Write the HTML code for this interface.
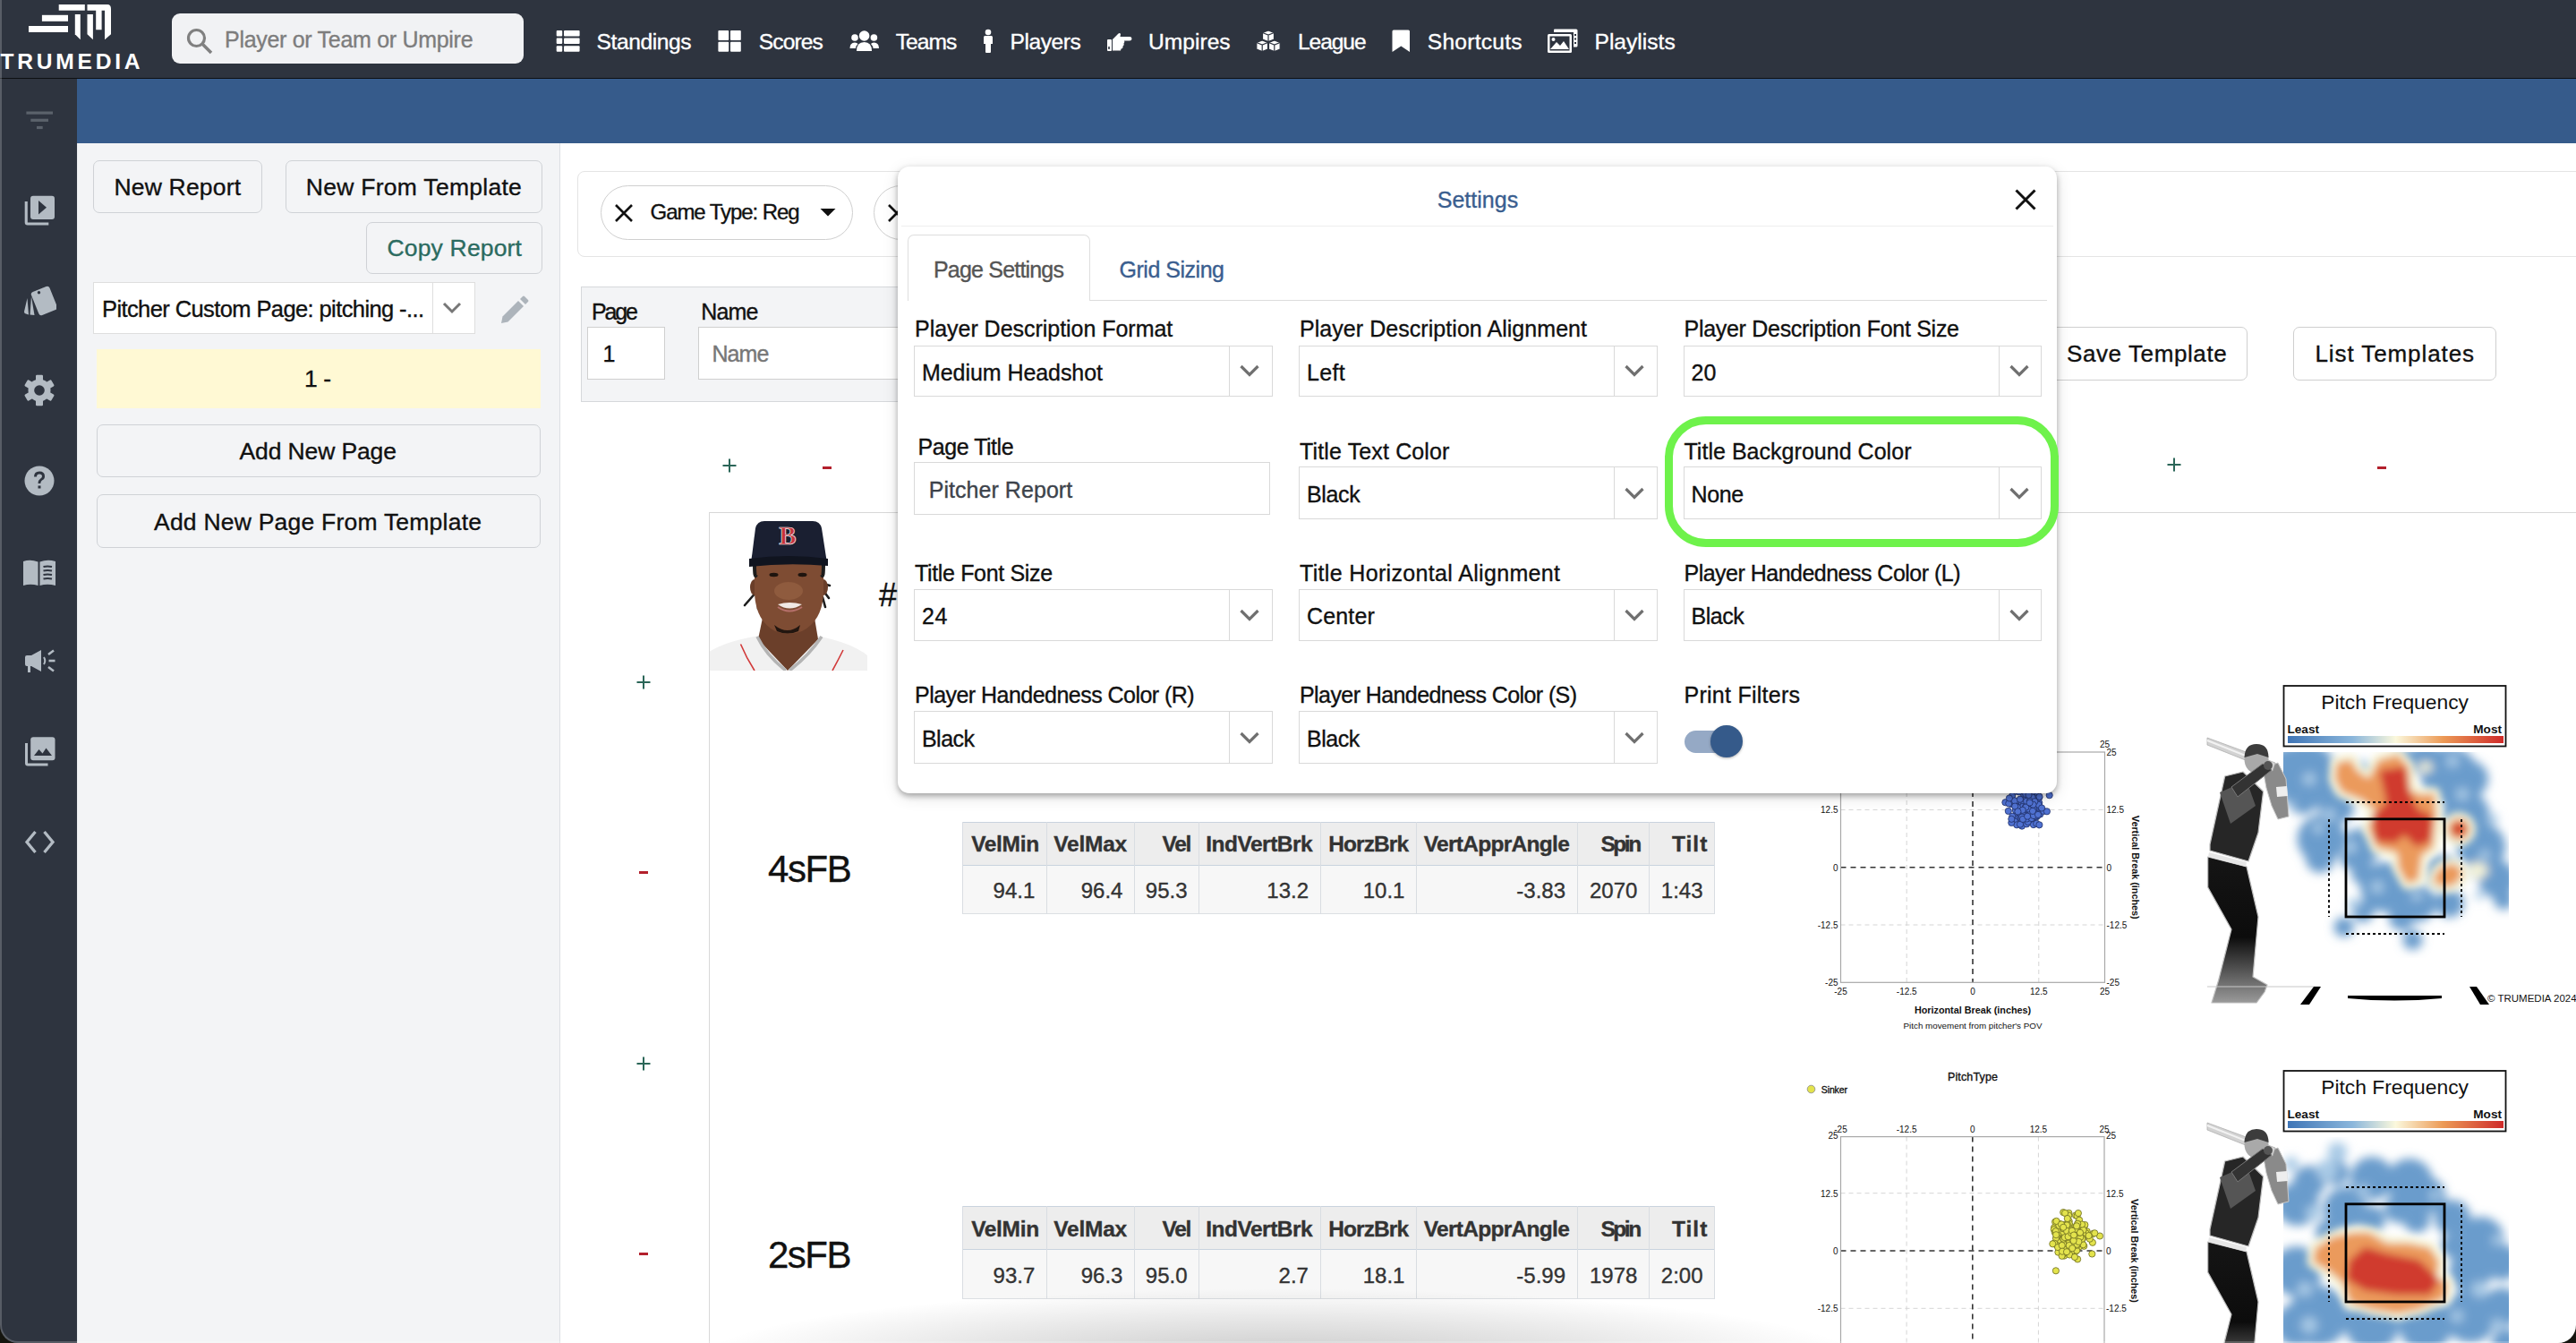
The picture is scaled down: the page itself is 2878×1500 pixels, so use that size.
<!DOCTYPE html><html><head><meta charset="utf-8"><title>TruMedia</title><style>
*{box-sizing:border-box;margin:0;padding:0}
html,body{width:2878px;height:1500px;overflow:hidden;background:#fff;font-family:"Liberation Sans",sans-serif;color:#111}
.a{position:absolute}
.t{position:absolute;white-space:nowrap;-webkit-text-stroke:0.35px currentColor}
</style></head><body>
<div class="a" style="left:0px;top:0px;width:2878px;height:87px;background:#2e343f"></div>
<div class="a" style="left:0px;top:87px;width:2878px;height:1px;background:#0d0f12"></div>
<svg class="a" style="left:0;top:0" width="170" height="87" viewBox="0 0 170 87">
<g fill="#fff">
<rect x="65.7" y="5" width="29.1" height="6.7"/>
<rect x="46.9" y="16.8" width="29.1" height="7"/>
<rect x="32" y="29" width="44" height="7"/>
<path d="M83.8 16 H89.8 V44.2 L83.8 38.3 Z"/>
<path d="M97.5 16 H103.9 V44.2 L97.5 38.3 Z"/>
<path d="M97.5 5 H120 Q124 5 124 10 V38.3 L117 44.2 V11.7 H113.6 V33.2 H107.2 V11.7 H97.5 Z"/>
</g>
<text x="0.5" y="76.7" font-family="Liberation Sans" font-weight="bold" font-size="24.6" fill="#fff" letter-spacing="3.75">TRUMEDIA</text>
</svg>
<div class="a" style="left:192px;top:15px;width:393px;height:56px;background:#f1f2f4;border-radius:9px"></div>
<svg class="a" style="left:207px;top:30px" width="34" height="32" viewBox="0 0 34 32">
<circle cx="12.5" cy="12.5" r="9" fill="none" stroke="#808080" stroke-width="3.2"/>
<line x1="19" y1="19" x2="29" y2="29" stroke="#808080" stroke-width="3.6" stroke-linecap="butt"/>
</svg>
<div class="t" style="top:24.0px;height:40px;line-height:40px;font-size:25px;color:#7d7d7d;font-weight:normal;letter-spacing:-0.296px;left:251.0px;">Player or Team or Umpire</div>
<div class="t" style="top:26.5px;height:39px;line-height:39px;font-size:24.6px;color:#fff;font-weight:normal;letter-spacing:-0.425px;left:666.6px;">Standings</div>
<div class="t" style="top:26.5px;height:39px;line-height:39px;font-size:24.6px;color:#fff;font-weight:normal;letter-spacing:-0.92px;left:847.8px;">Scores</div>
<div class="t" style="top:26.5px;height:39px;line-height:39px;font-size:24.6px;color:#fff;font-weight:normal;letter-spacing:-1.0px;left:1000.8px;">Teams</div>
<div class="t" style="top:26.5px;height:39px;line-height:39px;font-size:24.6px;color:#fff;font-weight:normal;letter-spacing:-0.433px;left:1128.5px;">Players</div>
<div class="t" style="top:26.5px;height:39px;line-height:39px;font-size:24.6px;color:#fff;font-weight:normal;letter-spacing:0.033px;left:1282.9px;">Umpires</div>
<div class="t" style="top:26.5px;height:39px;line-height:39px;font-size:24.6px;color:#fff;font-weight:normal;letter-spacing:-1.1px;left:1450.0px;">League</div>
<div class="t" style="top:26.5px;height:39px;line-height:39px;font-size:24.6px;color:#fff;font-weight:normal;letter-spacing:0.225px;left:1594.8px;">Shortcuts</div>
<div class="t" style="top:26.5px;height:39px;line-height:39px;font-size:24.6px;color:#fff;font-weight:normal;left:1781.5px;">Playlists</div>
<svg class="a" style="left:621px;top:33px" width="28" height="26" viewBox="0 0 28 26"><g fill="#fff">
<rect x="0.7" y="1" width="6.5" height="6.5" rx="1"/><rect x="9" y="1" width="17.6" height="6.5" rx="1"/>
<rect x="0.7" y="9.6" width="6.5" height="6.5" rx="1"/><rect x="9" y="9.6" width="17.6" height="6.5" rx="1"/>
<rect x="0.7" y="18.2" width="6.5" height="6.5" rx="1"/><rect x="9" y="18.2" width="17.6" height="6.5" rx="1"/>
</g></svg>
<svg class="a" style="left:802px;top:33px" width="28" height="26" viewBox="0 0 28 26"><g fill="#fff">
<rect x="0.4" y="1" width="11.8" height="11" rx="1"/><rect x="14" y="1" width="11.8" height="11" rx="1"/>
<rect x="0.4" y="13.8" width="11.8" height="11" rx="1"/><rect x="14" y="13.8" width="11.8" height="11" rx="1"/>
</g></svg>
<svg class="a" style="left:949px;top:33px" width="34" height="26" viewBox="0 0 34 26"><g fill="#fff">
<circle cx="16.6" cy="7" r="5.8"/><path d="M8 24 Q8 14 16.6 14 Q25 14 25 24 Z"/>
<circle cx="6" cy="9" r="3.8"/><path d="M0.5 21 Q0.5 14.5 6 14.5 Q8.5 14.5 9.5 16 Q7 18.5 7 21 Z"/>
<circle cx="27.4" cy="9" r="3.8"/><path d="M33 21 Q33 14.5 27.4 14.5 Q25 14.5 24 16 Q26.5 18.5 26.5 21 Z"/>
</g></svg>
<svg class="a" style="left:1097px;top:32px" width="14" height="28" viewBox="0 0 14 28"><g fill="#fff">
<circle cx="7" cy="4" r="3.3"/><path d="M2 9.5 Q2 8 3.5 8 H10.5 Q12 8 12 9.5 V17 L10 17 V26 Q10 27 9 27 H5 Q4 27 4 26 V17 L2 17 Z"/>
</g></svg>
<svg class="a" style="left:1236px;top:33px" width="30" height="26" viewBox="0 0 30 26"><g fill="#fff">
<rect x="1" y="11" width="5" height="13" rx="1"/>
<path d="M7 11 L13 5 Q15 3 16 5 L15.5 8 H26 Q28.5 8 28.5 10.2 Q28.5 12.4 26 12.4 H20 Q21 14 19.5 15.5 Q20.5 17.5 18.5 18.5 Q19 21 16.5 21.5 L16 23.5 H7 Z"/>
</g><rect x="2.2" y="19" width="1.6" height="3" fill="#2e343f"/></svg>
<svg class="a" style="left:1403px;top:33px" width="28" height="26" viewBox="0 0 28 26"><g fill="#fff" stroke="#2e343f" stroke-width="1.2">
<path d="M14 1 L20.5 3.5 V11 L14 13.5 L7.5 11 V3.5 Z"/>
<path d="M7.2 12 L13.5 14.5 V22 L7.2 24.5 L0.8 22 V14.5 Z"/>
<path d="M20.8 12 L27.2 14.5 V22 L20.8 24.5 L14.5 22 V14.5 Z"/>
<path d="M7.5 3.5 L14 6 L20.5 3.5 M14 6 V13.5 M0.8 14.5 L7.2 17 L13.5 14.5 M7.2 17 V24.5 M14.5 14.5 L20.8 17 L27.2 14.5 M20.8 17 V24.5" fill="none"/>
</g></svg>
<svg class="a" style="left:1555px;top:33px" width="22" height="26" viewBox="0 0 22 26"><path fill="#fff" d="M0.5 2 Q0.5 0.5 2 0.5 H18.5 Q20 0.5 20 2 V25 L10.3 18.5 L0.5 25 Z"/></svg>
<svg class="a" style="left:1728px;top:32px" width="36" height="28" viewBox="0 0 36 28"><g fill="#fff">
<path d="M8 1.5 Q8 0.5 9 0.5 H33 Q34.5 0.5 34.5 2 V19 Q34.5 20.5 33 20.5 H30 V4 H8 Z"/>
<rect x="1" y="6" width="27" height="21" rx="1.5"/>
</g><g fill="#2e343f"><rect x="3.5" y="8.5" width="22" height="16"/></g>
<g fill="#fff"><circle cx="7.5" cy="12" r="2"/><path d="M4 23 L11 15 L15 19 L19 14 L25 23 Z"/>
<rect x="31" y="6" width="2" height="2" fill="#2e343f"/><rect x="31" y="10.5" width="2" height="2" fill="#2e343f"/><rect x="31" y="15" width="2" height="2" fill="#2e343f"/></g></svg>
<div class="a" style="left:86px;top:88px;width:2792px;height:72px;background:#365b8b"></div>
<div class="a" style="left:0px;top:88px;width:86px;height:1412px;background:#2e343f"></div>
<svg class="a" style="left:28px;top:123px" width="32" height="22" viewBox="0 0 32 22"><g fill="#5b626b">
<rect x="1.4" y="1.5" width="29.6" height="3.2"/><rect x="6.3" y="9.7" width="19.7" height="3.2"/><rect x="13" y="17.9" width="6.7" height="3.2"/>
</g></svg>
<svg class="a" style="left:26px;top:217px" width="36" height="36" viewBox="0 0 36 36">
<path d="M1.7 8 H4.8 V31.6 H28.3 V34.6 H4.7 Q1.7 34.6 1.7 31.6 Z" fill="#b3bbc3"/>
<rect x="8" y="1.7" width="27" height="26.3" rx="3" fill="#b3bbc3"/>
<path d="M17 7 L26 14.8 L17 22.6 Z" fill="#2e343f"/>
</svg>
<svg class="a" style="left:25px;top:318px" width="38" height="36" viewBox="0 0 38 36">
<g transform="rotate(-22 24 17)"><rect x="13" y="4" width="22" height="28" rx="3" fill="#b3bbc3"/></g>
<circle cx="18.5" cy="8.7" r="1.7" fill="#2e343f"/>
<path d="M5.5 15 L2 30 Q1.8 32 4 32.5 L7 33.5 Z" fill="#b3bbc3"/>
<path d="M10 13 L8.5 33.5 L13.5 34 Z" fill="#b3bbc3"/>
</svg>
<svg class="a" style="left:25px;top:417px" width="38" height="38" viewBox="0 0 38 38"><g fill="#b3bbc3">
<rect x="15" y="1.8" width="8" height="9" rx="1.2" transform="rotate(0 19 19)"/><rect x="15" y="1.8" width="8" height="9" rx="1.2" transform="rotate(60 19 19)"/><rect x="15" y="1.8" width="8" height="9" rx="1.2" transform="rotate(120 19 19)"/><rect x="15" y="1.8" width="8" height="9" rx="1.2" transform="rotate(180 19 19)"/><rect x="15" y="1.8" width="8" height="9" rx="1.2" transform="rotate(240 19 19)"/><rect x="15" y="1.8" width="8" height="9" rx="1.2" transform="rotate(300 19 19)"/><circle cx="19" cy="19" r="12.5"/></g>
<circle cx="19" cy="19" r="5.8" fill="#2e343f"/>
</svg>
<svg class="a" style="left:26px;top:519px" width="36" height="36" viewBox="0 0 36 36">
<circle cx="18" cy="18" r="16.5" fill="#b3bbc3"/>
<path d="M12 13.5 Q12 7.5 18 7.5 Q24 7.5 24 13 Q24 16 21 17.5 Q19.3 18.5 19.3 21 H16.5 Q16.5 17.3 19 15.8 Q21 14.6 21 13 Q21 10.5 18 10.5 Q15 10.5 15 13.5 Z" fill="#2e343f"/>
<rect x="16.5" y="23.5" width="3" height="3" fill="#2e343f"/>
</svg>
<svg class="a" style="left:25px;top:624px" width="38" height="32" viewBox="0 0 38 32">
<path d="M1 3 Q9 0.5 17.5 3.5 V30 Q9 27.5 1 30 Z" fill="#b3bbc3"/>
<path d="M19.5 3.5 Q28 0.5 37 3 V30 Q28 27.5 19.5 30 Z" fill="#b3bbc3"/>
<g stroke="#2e343f" stroke-width="2" fill="none"><path d="M23.5 9 Q28 8 33 9"/><path d="M23.5 13.5 Q28 12.5 33 13.5"/><path d="M23.5 18 Q28 17 33 18"/><path d="M23.5 22.5 Q28 21.5 33 22.5"/></g>
</svg>
<svg class="a" style="left:27px;top:723px" width="36" height="32" viewBox="0 0 36 32">
<path d="M1 11 Q1 9 3 9 H8 L19 3 V27 L8 21 H7 V28 H4 V21 H3 Q1 21 1 19 Z" fill="#b3bbc3"/>
<path d="M22 11 Q24.5 15 22 19" stroke="#b3bbc3" stroke-width="2" fill="none"/>
<g stroke="#b3bbc3" stroke-width="2.6"><line x1="27" y1="8" x2="33" y2="3.5"/><line x1="27.5" y1="15" x2="34.5" y2="15"/><line x1="27" y1="22" x2="33" y2="26.5"/></g>
</svg>
<svg class="a" style="left:27px;top:822px" width="36" height="36" viewBox="0 0 36 36">
<path d="M1 8 H4 V30.6 H26.5 V33.6 H4 Q1 33.6 1 30.6 Z" fill="#b3bbc3"/>
<rect x="7.2" y="1.3" width="27.3" height="26" rx="3" fill="#b3bbc3"/>
<path d="M11 22 L16.5 15 L20.5 19.5 L24.5 13.5 L31 22 Z" fill="#2e343f"/>
</svg>
<svg class="a" style="left:27px;top:924px" width="36" height="34" viewBox="0 0 36 34">
<path d="M12.5 5 L3 16.5 L12.5 28" stroke="#b3bbc3" stroke-width="3.3" fill="none"/>
<path d="M22.5 5 L32 16.5 L22.5 28" stroke="#b3bbc3" stroke-width="3.3" fill="none"/>
</svg>
<div class="a" style="left:86px;top:160px;width:540px;height:1340px;background:#f3f4f6;border-right:1px solid #dcdfe3"></div>
<div class="a" style="left:86px;top:160px;width:1px;height:1340px;background:#e9ebee"></div>
<div class="a" style="left:104px;top:179px;width:189px;height:59px;background:#f3f4f6;border:1.5px solid #cfd2d6;border-radius:7px"></div>
<div class="t" style="top:188.0px;height:42px;line-height:42px;font-size:26.5px;color:#111;font-weight:normal;letter-spacing:0.178px;left:127.5px;">New Report</div>
<div class="a" style="left:319px;top:179px;width:287px;height:59px;background:#f3f4f6;border:1.5px solid #cfd2d6;border-radius:7px"></div>
<div class="t" style="top:188.0px;height:42px;line-height:42px;font-size:26.5px;color:#111;font-weight:normal;letter-spacing:0.275px;left:341.8px;">New From Template</div>
<div class="a" style="left:409px;top:247.5px;width:197px;height:58.5px;background:#f3f4f6;border:1.5px solid #cfd2d6;border-radius:7px"></div>
<div class="t" style="top:256.0px;height:42px;line-height:42px;font-size:26.5px;color:#2b6b60;font-weight:normal;letter-spacing:0.17px;left:432.5px;">Copy Report</div>
<div class="a" style="left:104px;top:315px;width:427px;height:58px;background:#fff;border:1px solid #dedede"></div>
<div class="a" style="left:483px;top:315px;width:1px;height:58px;background:#dedede"></div>
<div class="t" style="top:325.0px;height:40px;line-height:40px;font-size:25.5px;color:#111;font-weight:normal;letter-spacing:-0.6px;left:114.0px;">Pitcher Custom Page: pitching -...</div>
<svg class="a" style="left:494px;top:337px" width="22" height="14" viewBox="0 0 22 14"><path d="M2 2 L11 11 L20 2" stroke="#777" stroke-width="3" fill="none"/></svg>
<svg class="a" style="left:558px;top:329px" width="34" height="34" viewBox="0 0 34 34"><g fill="#adb4bb">
<path d="M2 32 L3.5 24.5 L21 7 L27 13 L9.5 30.5 Z"/><path d="M23 5 L26 2 Q27 1 28 2 L32 6 Q33 7 32 8 L29 11 Z"/></g></svg>
<div class="a" style="left:108px;top:390px;width:496px;height:66px;background:#fff9d4"></div>
<div class="t" style="top:402.0px;height:42px;line-height:42px;font-size:26.5px;color:#111;font-weight:normal;letter-spacing:-0.45px;left:-645.225px;width:2000px;text-align:center;">1 -</div>
<div class="a" style="left:108px;top:474px;width:496px;height:59px;background:#f3f4f6;border:1.5px solid #cfd2d6;border-radius:7px"></div>
<div class="t" style="top:483.0px;height:42px;line-height:42px;font-size:26.5px;color:#111;font-weight:normal;letter-spacing:-0.118px;left:267.5px;">Add New Page</div>
<div class="a" style="left:108px;top:552px;width:496px;height:60px;background:#f3f4f6;border:1.5px solid #cfd2d6;border-radius:7px"></div>
<div class="t" style="top:561.5px;height:42px;line-height:42px;font-size:26.5px;color:#111;font-weight:normal;letter-spacing:0.224px;left:172.0px;">Add New Page From Template</div>
<div class="a" style="left:645px;top:191px;width:2255px;height:96px;background:#fff;border:1px solid #e4e4e4;border-radius:8px"></div>
<div class="a" style="left:671px;top:206.5px;width:282px;height:61.0px;background:#fff;border:1.3px solid #cfcfcf;border-radius:31px"></div>
<svg class="a" style="left:685px;top:226px" width="24" height="24" viewBox="0 0 24 24"><path d="M3 3 L21 21 M21 3 L3 21" stroke="#111" stroke-width="2.6"/></svg>
<div class="t" style="top:218.0px;height:38px;line-height:38px;font-size:24px;color:#111;font-weight:normal;letter-spacing:-1.077px;left:726.6px;">Game Type: Reg</div>
<svg class="a" style="left:915px;top:231px" width="20" height="12" viewBox="0 0 20 12"><path d="M1.5 2 H18.5 L10 10.5 Z" fill="#111"/></svg>
<div class="a" style="left:976px;top:206.5px;width:264px;height:61.0px;background:#fff;border:1.3px solid #cfcfcf;border-radius:31px"></div>
<svg class="a" style="left:990px;top:226px" width="24" height="24" viewBox="0 0 24 24"><path d="M3 3 L21 21 M21 3 L3 21" stroke="#111" stroke-width="2.6"/></svg>
<div class="a" style="left:648.5px;top:319.6px;width:851.5px;height:129.89999999999998px;background:#f3f4f6;border:1px solid #d6d8db"></div>
<div class="t" style="top:327.5px;height:40px;line-height:40px;font-size:25px;color:#111;font-weight:normal;letter-spacing:-2.2px;left:661.0px;">Page</div>
<div class="t" style="top:327.5px;height:40px;line-height:40px;font-size:25px;color:#111;font-weight:normal;letter-spacing:-0.9px;left:783.3px;">Name</div>
<div class="a" style="left:656px;top:364.5px;width:86.60000000000002px;height:59.10000000000002px;background:#fff;border:1px solid #cfcfcf"></div>
<div class="t" style="top:375.0px;height:40px;line-height:40px;font-size:25px;color:#111;font-weight:normal;left:673.4px;">1</div>
<div class="a" style="left:779.7px;top:364.5px;width:620.3px;height:59.10000000000002px;background:#fff;border:1px solid #cfcfcf"></div>
<div class="t" style="top:375.0px;height:40px;line-height:40px;font-size:25px;color:#777;font-weight:normal;letter-spacing:-0.9px;left:795.4px;">Name</div>
<svg class="a" style="left:807px;top:512px" width="16" height="16" viewBox="0 0 16 16"><path d="M8 0.5 V15.5 M0.5 8 H15.5" stroke="#2b6658" stroke-width="2"/></svg>
<div class="a" style="left:919px;top:520.5px;width:10px;height:3.0px;background:#b3202c"></div>
<svg class="a" style="left:2421px;top:511.4px" width="16" height="16" viewBox="0 0 16 16"><path d="M8 0.5 V15.5 M0.5 8 H15.5" stroke="#2b6658" stroke-width="2"/></svg>
<div class="a" style="left:2656px;top:520.5px;width:10px;height:3.0px;background:#b3202c"></div>
<div class="a" style="left:2250px;top:365px;width:261px;height:60px;background:#fff;border:1.3px solid #cfcfcf;border-radius:7px"></div>
<div class="t" style="top:374.5px;height:41px;line-height:41px;font-size:26px;color:#111;font-weight:normal;letter-spacing:0.6px;left:2309.0px;">Save Template</div>
<div class="a" style="left:2562px;top:365px;width:226.5px;height:60px;background:#fff;border:1.3px solid #cfcfcf;border-radius:7px"></div>
<div class="t" style="top:374.5px;height:41px;line-height:41px;font-size:26px;color:#111;font-weight:normal;letter-spacing:0.908px;left:2586.5px;">List Templates</div>
<div class="a" style="left:792px;top:572px;width:2086px;height:928px;border-left:1px solid #d8d8d8;border-top:1px solid #d8d8d8"></div>
<svg class="a" style="left:711px;top:754px" width="16" height="16" viewBox="0 0 16 16"><path d="M8 0.5 V15.5 M0.5 8 H15.5" stroke="#2b6658" stroke-width="2"/></svg>
<div class="a" style="left:714px;top:972.5px;width:10px;height:3.0px;background:#b3202c"></div>
<svg class="a" style="left:711px;top:1180px" width="16" height="16" viewBox="0 0 16 16"><path d="M8 0.5 V15.5 M0.5 8 H15.5" stroke="#2b6658" stroke-width="2"/></svg>
<div class="a" style="left:714px;top:1398.5px;width:10px;height:3.0px;background:#b3202c"></div>
<div class="t" style="top:635.5px;height:57px;line-height:57px;font-size:36px;color:#111;font-weight:normal;left:982px;">#</div>
<div class="t" style="top:936.5px;height:67px;line-height:67px;font-size:42px;color:#111;font-weight:normal;letter-spacing:-1.433px;left:858.0px;">4sFB</div>
<div class="t" style="top:1367.5px;height:67px;line-height:67px;font-size:42px;color:#111;font-weight:normal;letter-spacing:-1.5px;left:858.0px;">2sFB</div>
<div class="a" style="left:1075.7px;top:917.8px;width:839.8px;height:48.799999999999955px;background:#ededed;border-top:1.5px solid #c9d3de;border-bottom:1.5px solid #c9d3de"></div>
<div class="a" style="left:1075.7px;top:966.5999999999999px;width:839.8px;height:54.700000000000045px;background:#f7f7f7;border-bottom:1px solid #dcdfe3"></div>
<div class="a" style="left:1075.2px;top:917.8px;width:1.0px;height:103.5px;background:#d9dde2"></div>
<div class="a" style="left:1168.8px;top:917.8px;width:1.0px;height:103.5px;background:#d9dde2"></div>
<div class="a" style="left:1266.9px;top:917.8px;width:1.0px;height:103.5px;background:#d9dde2"></div>
<div class="a" style="left:1339.0px;top:917.8px;width:1.0px;height:103.5px;background:#d9dde2"></div>
<div class="a" style="left:1474.5px;top:917.8px;width:1.0px;height:103.5px;background:#d9dde2"></div>
<div class="a" style="left:1581.9px;top:917.8px;width:1.0px;height:103.5px;background:#d9dde2"></div>
<div class="a" style="left:1761.5px;top:917.8px;width:1.0px;height:103.5px;background:#d9dde2"></div>
<div class="a" style="left:1841.9px;top:917.8px;width:1.0px;height:103.5px;background:#d9dde2"></div>
<div class="a" style="left:1915.0px;top:917.8px;width:1.0px;height:103.5px;background:#d9dde2"></div>
<div class="t" style="top:923.2px;height:39px;line-height:39px;font-size:24.5px;color:#333;font-weight:bold;letter-spacing:-0.34px;left:-839.2384374999999px;width:2000px;text-align:right;">VelMin</div>
<div class="t" style="top:923.2px;height:39px;line-height:39px;font-size:24.5px;color:#333;font-weight:bold;letter-spacing:-0.22px;left:-741.0403125px;width:2000px;text-align:right;">VelMax</div>
<div class="t" style="top:923.2px;height:39px;line-height:39px;font-size:24.5px;color:#333;font-weight:bold;letter-spacing:-1.25px;left:-669.9296875px;width:2000px;text-align:right;">Vel</div>
<div class="t" style="top:923.2px;height:39px;line-height:39px;font-size:24.5px;color:#333;font-weight:bold;letter-spacing:-0.489px;left:-533.7904513888889px;width:2000px;text-align:right;">IndVertBrk</div>
<div class="t" style="top:923.2px;height:39px;line-height:39px;font-size:24.5px;color:#333;font-weight:bold;letter-spacing:-0.917px;left:-426.8197916666668px;width:2000px;text-align:right;">HorzBrk</div>
<div class="t" style="top:923.2px;height:39px;line-height:39px;font-size:24.5px;color:#333;font-weight:bold;letter-spacing:-0.708px;left:-246.8848958333333px;width:2000px;text-align:right;">VertApprAngle</div>
<div class="t" style="top:923.2px;height:39px;line-height:39px;font-size:24.5px;color:#333;font-weight:bold;letter-spacing:-2.433px;left:-168.25520833333326px;width:2000px;text-align:right;">Spin</div>
<div class="t" style="top:923.2px;height:39px;line-height:39px;font-size:24.5px;color:#333;font-weight:bold;letter-spacing:1.0px;left:-91.70468750000009px;width:2000px;text-align:right;">Tilt</div>
<div class="t" style="top:975.9px;height:38px;line-height:38px;font-size:24px;color:#333;font-weight:normal;left:-843.6859375000001px;width:2000px;text-align:right;">94.1</div>
<div class="t" style="top:975.9px;height:38px;line-height:38px;font-size:24px;color:#333;font-weight:normal;left:-745.5859375px;width:2000px;text-align:right;">96.4</div>
<div class="t" style="top:975.9px;height:38px;line-height:38px;font-size:24px;color:#333;font-weight:normal;left:-673.4859375000001px;width:2000px;text-align:right;">95.3</div>
<div class="t" style="top:975.9px;height:38px;line-height:38px;font-size:24px;color:#333;font-weight:normal;left:-537.9859375000001px;width:2000px;text-align:right;">13.2</div>
<div class="t" style="top:975.9px;height:38px;line-height:38px;font-size:24px;color:#333;font-weight:normal;left:-430.5859375px;width:2000px;text-align:right;">10.1</div>
<div class="t" style="top:975.9px;height:38px;line-height:38px;font-size:24px;color:#333;font-weight:normal;left:-250.9937500000001px;width:2000px;text-align:right;">-3.83</div>
<div class="t" style="top:975.9px;height:38px;line-height:38px;font-size:24px;color:#333;font-weight:normal;left:-170.60624999999982px;width:2000px;text-align:right;">2070</div>
<div class="t" style="top:975.9px;height:38px;line-height:38px;font-size:24px;color:#333;font-weight:normal;left:-97.48593750000009px;width:2000px;text-align:right;">1:43</div>
<div class="a" style="left:1075.7px;top:1347.4px;width:839.8px;height:48.799999999999955px;background:#ededed;border-top:1.5px solid #c9d3de;border-bottom:1.5px solid #c9d3de"></div>
<div class="a" style="left:1075.7px;top:1396.2px;width:839.8px;height:54.700000000000045px;background:#f7f7f7;border-bottom:1px solid #dcdfe3"></div>
<div class="a" style="left:1075.2px;top:1347.4px;width:1.0px;height:103.5px;background:#d9dde2"></div>
<div class="a" style="left:1168.8px;top:1347.4px;width:1.0px;height:103.5px;background:#d9dde2"></div>
<div class="a" style="left:1266.9px;top:1347.4px;width:1.0px;height:103.5px;background:#d9dde2"></div>
<div class="a" style="left:1339.0px;top:1347.4px;width:1.0px;height:103.5px;background:#d9dde2"></div>
<div class="a" style="left:1474.5px;top:1347.4px;width:1.0px;height:103.5px;background:#d9dde2"></div>
<div class="a" style="left:1581.9px;top:1347.4px;width:1.0px;height:103.5px;background:#d9dde2"></div>
<div class="a" style="left:1761.5px;top:1347.4px;width:1.0px;height:103.5px;background:#d9dde2"></div>
<div class="a" style="left:1841.9px;top:1347.4px;width:1.0px;height:103.5px;background:#d9dde2"></div>
<div class="a" style="left:1915.0px;top:1347.4px;width:1.0px;height:103.5px;background:#d9dde2"></div>
<div class="t" style="top:1352.8px;height:39px;line-height:39px;font-size:24.5px;color:#333;font-weight:bold;letter-spacing:-0.34px;left:-839.2384374999999px;width:2000px;text-align:right;">VelMin</div>
<div class="t" style="top:1352.8px;height:39px;line-height:39px;font-size:24.5px;color:#333;font-weight:bold;letter-spacing:-0.22px;left:-741.0403125px;width:2000px;text-align:right;">VelMax</div>
<div class="t" style="top:1352.8px;height:39px;line-height:39px;font-size:24.5px;color:#333;font-weight:bold;letter-spacing:-1.25px;left:-669.9296875px;width:2000px;text-align:right;">Vel</div>
<div class="t" style="top:1352.8px;height:39px;line-height:39px;font-size:24.5px;color:#333;font-weight:bold;letter-spacing:-0.489px;left:-533.7904513888889px;width:2000px;text-align:right;">IndVertBrk</div>
<div class="t" style="top:1352.8px;height:39px;line-height:39px;font-size:24.5px;color:#333;font-weight:bold;letter-spacing:-0.917px;left:-426.8197916666668px;width:2000px;text-align:right;">HorzBrk</div>
<div class="t" style="top:1352.8px;height:39px;line-height:39px;font-size:24.5px;color:#333;font-weight:bold;letter-spacing:-0.708px;left:-246.8848958333333px;width:2000px;text-align:right;">VertApprAngle</div>
<div class="t" style="top:1352.8px;height:39px;line-height:39px;font-size:24.5px;color:#333;font-weight:bold;letter-spacing:-2.433px;left:-168.25520833333326px;width:2000px;text-align:right;">Spin</div>
<div class="t" style="top:1352.8px;height:39px;line-height:39px;font-size:24.5px;color:#333;font-weight:bold;letter-spacing:1.0px;left:-91.70468750000009px;width:2000px;text-align:right;">Tilt</div>
<div class="t" style="top:1405.6px;height:38px;line-height:38px;font-size:24px;color:#333;font-weight:normal;left:-843.6859375000001px;width:2000px;text-align:right;">93.7</div>
<div class="t" style="top:1405.6px;height:38px;line-height:38px;font-size:24px;color:#333;font-weight:normal;left:-745.5859375px;width:2000px;text-align:right;">96.3</div>
<div class="t" style="top:1405.6px;height:38px;line-height:38px;font-size:24px;color:#333;font-weight:normal;left:-673.4859375000001px;width:2000px;text-align:right;">95.0</div>
<div class="t" style="top:1405.6px;height:38px;line-height:38px;font-size:24px;color:#333;font-weight:normal;left:-538.034375px;width:2000px;text-align:right;">2.7</div>
<div class="t" style="top:1405.6px;height:38px;line-height:38px;font-size:24px;color:#333;font-weight:normal;left:-430.5859375px;width:2000px;text-align:right;">18.1</div>
<div class="t" style="top:1405.6px;height:38px;line-height:38px;font-size:24px;color:#333;font-weight:normal;left:-250.9937500000001px;width:2000px;text-align:right;">-5.99</div>
<div class="t" style="top:1405.6px;height:38px;line-height:38px;font-size:24px;color:#333;font-weight:normal;left:-170.60624999999982px;width:2000px;text-align:right;">1978</div>
<div class="t" style="top:1405.6px;height:38px;line-height:38px;font-size:24px;color:#333;font-weight:normal;left:-97.48593750000009px;width:2000px;text-align:right;">2:00</div>
<svg class="a" style="left:793px;top:573px" width="176" height="176" viewBox="1 1 176 176"><rect x="1" y="1" width="176" height="176" fill="#fff"/><path d="M0 156 Q22 143 57 138 L88 177 L120 138 Q160 146 177 160 V177 H0 Z" fill="#f1f1f1"/><path d="M35.5 147.5 Q42 163 51 177 M150 154 Q144 166 138 177" stroke="#d23a3a" stroke-width="1.6" fill="none"/><path d="M60 118 L118 118 L122 142 L88 177 L55 142 Z" fill="#6b3f2a"/><path d="M54 139 Q64 160 86 177 M126 139 Q112 160 90 177" stroke="#b4b4b4" stroke-width="3.5" fill="none"/><path d="M54 88 L40 104 M55 95 L55 108 M128 80 L135 82 M128 88 L134 96 M127 95 L130 106" stroke="#1d1d1d" stroke-width="2.6" stroke-linecap="round"/><ellipse cx="51" cy="84" rx="5" ry="9" fill="#6a3e29"/><ellipse cx="128" cy="84" rx="5" ry="9" fill="#6a3e29"/><path d="M51 62 Q51 50 89 50 Q128 50 128 62 L128 92 Q126 122 104 133 Q89 139 74 133 Q53 122 51 92 Z" fill="#7e4c33"/><ellipse cx="89" cy="88" rx="16" ry="10" fill="#8f5b3e"/><path d="M73 126 Q88 138 102 126 L100 133 Q88 138 76 133 Z" fill="#221610"/><path d="M77 103 Q90 99 104 103 Q90 112 77 103 Z" fill="#f0e8e4"/><path d="M77 106 Q90 115 104 106" stroke="#b6706a" stroke-width="2" fill="none"/><ellipse cx="72.5" cy="70" rx="5" ry="2.2" fill="#1e140e"/><ellipse cx="104.5" cy="70" rx="5" ry="2.2" fill="#1e140e"/><path d="M51 58 Q51 75 53 70 M128 58 Q128 75 126 70" stroke="#1d1d1d" stroke-width="4"/><path d="M47 57 L52 18 Q54 10 62 10 L116 10 Q124 10 126 18 L132 57 Z" fill="#1a1f31"/><path d="M45 52 Q89 46 133 52 L133 60 Q89 56 45 61 Z" fill="#10141f"/><text x="88" y="36" text-anchor="middle" font-family="Liberation Serif" font-weight="bold" font-size="29" fill="#c8323a" stroke="#f4f4f4" stroke-width="0.7">B</text></svg>
<svg class="a" style="left:0;top:0;overflow:visible" width="2878" height="1500"><line x1="2130.2" y1="840" x2="2130.2" y2="1097.3" stroke="#d5d5d5" stroke-width="1" stroke-dasharray="5,4"/><line x1="2056.5" y1="1033.0" x2="2351.5" y2="1033.0" stroke="#d5d5d5" stroke-width="1" stroke-dasharray="5,4"/><line x1="2277.8" y1="840" x2="2277.8" y2="1097.3" stroke="#d5d5d5" stroke-width="1" stroke-dasharray="5,4"/><line x1="2056.5" y1="904.4" x2="2351.5" y2="904.4" stroke="#d5d5d5" stroke-width="1" stroke-dasharray="5,4"/><line x1="2204.0" y1="840" x2="2204.0" y2="1097.3" stroke="#333" stroke-width="1.6" stroke-dasharray="6,5"/><line x1="2056.5" y1="968.7" x2="2351.5" y2="968.7" stroke="#333" stroke-width="1.6" stroke-dasharray="6,5"/><rect x="2056.5" y="840" width="295.0" height="257.3" fill="none" stroke="#a8a8a8" stroke-width="1.2"/><text x="2053.5" y="844.1" text-anchor="end" font-family="Liberation Sans" font-size="10" fill="#111">25</text><text x="2353.5" y="844.1" font-family="Liberation Sans" font-size="10" fill="#111">25</text><text x="2053.5" y="908.4" text-anchor="end" font-family="Liberation Sans" font-size="10" fill="#111">12.5</text><text x="2353.5" y="908.4" font-family="Liberation Sans" font-size="10" fill="#111">12.5</text><text x="2053.5" y="972.7" text-anchor="end" font-family="Liberation Sans" font-size="10" fill="#111">0</text><text x="2353.5" y="972.7" font-family="Liberation Sans" font-size="10" fill="#111">0</text><text x="2053.5" y="1037.0" text-anchor="end" font-family="Liberation Sans" font-size="10" fill="#111">-12.5</text><text x="2353.5" y="1037.0" font-family="Liberation Sans" font-size="10" fill="#111">-12.5</text><text x="2053.5" y="1101.3" text-anchor="end" font-family="Liberation Sans" font-size="10" fill="#111">-25</text><text x="2353.5" y="1101.3" font-family="Liberation Sans" font-size="10" fill="#111">-25</text><text x="2056.5" y="835" text-anchor="middle" font-family="Liberation Sans" font-size="10" fill="#111">-25</text><text x="2056.5" y="1111.3" text-anchor="middle" font-family="Liberation Sans" font-size="10" fill="#111">-25</text><text x="2130.2" y="835" text-anchor="middle" font-family="Liberation Sans" font-size="10" fill="#111">-12.5</text><text x="2130.2" y="1111.3" text-anchor="middle" font-family="Liberation Sans" font-size="10" fill="#111">-12.5</text><text x="2204.0" y="835" text-anchor="middle" font-family="Liberation Sans" font-size="10" fill="#111">0</text><text x="2204.0" y="1111.3" text-anchor="middle" font-family="Liberation Sans" font-size="10" fill="#111">0</text><text x="2277.8" y="835" text-anchor="middle" font-family="Liberation Sans" font-size="10" fill="#111">12.5</text><text x="2277.8" y="1111.3" text-anchor="middle" font-family="Liberation Sans" font-size="10" fill="#111">12.5</text><text x="2351.5" y="835" text-anchor="middle" font-family="Liberation Sans" font-size="10" fill="#111">25</text><text x="2351.5" y="1111.3" text-anchor="middle" font-family="Liberation Sans" font-size="10" fill="#111">25</text><text x="2204.0" y="1132.3" text-anchor="middle" font-family="Liberation Sans" font-weight="bold" font-size="10.8" fill="#111">Horizontal Break (inches)</text><text x="2204.0" y="1149.3" text-anchor="middle" font-family="Liberation Sans" font-size="9.8" fill="#111">Pitch movement from pitcher's POV</text><text transform="translate(2381.5,968.7) rotate(90)" text-anchor="middle" font-family="Liberation Sans" font-weight="bold" font-size="10.8" fill="#111">Vertical Break (inches)</text></svg>
<div class="t" style="left:2103px;top:770px;font-size:12px;height:20px;line-height:20px">PitchType</div>
<svg class="a" style="left:0;top:0;overflow:visible" width="2878" height="1500"><circle cx="2262.7" cy="908.1" r="3.6" fill="#5072d2" stroke="#1f2f66" stroke-width="0.8"/><circle cx="2263.0" cy="898.2" r="3.6" fill="#5072d2" stroke="#1f2f66" stroke-width="0.8"/><circle cx="2256.6" cy="899.4" r="3.6" fill="#5072d2" stroke="#1f2f66" stroke-width="0.8"/><circle cx="2275.0" cy="907.1" r="3.6" fill="#5072d2" stroke="#1f2f66" stroke-width="0.8"/><circle cx="2274.3" cy="905.0" r="3.6" fill="#5072d2" stroke="#1f2f66" stroke-width="0.8"/><circle cx="2268.6" cy="904.2" r="3.6" fill="#5072d2" stroke="#1f2f66" stroke-width="0.8"/><circle cx="2250.0" cy="912.3" r="3.6" fill="#5072d2" stroke="#1f2f66" stroke-width="0.8"/><circle cx="2269.6" cy="908.0" r="3.6" fill="#5072d2" stroke="#1f2f66" stroke-width="0.8"/><circle cx="2249.8" cy="881.1" r="3.6" fill="#5072d2" stroke="#1f2f66" stroke-width="0.8"/><circle cx="2257.0" cy="896.4" r="3.6" fill="#5072d2" stroke="#1f2f66" stroke-width="0.8"/><circle cx="2267.7" cy="901.4" r="3.6" fill="#5072d2" stroke="#1f2f66" stroke-width="0.8"/><circle cx="2269.7" cy="894.3" r="3.6" fill="#5072d2" stroke="#1f2f66" stroke-width="0.8"/><circle cx="2267.8" cy="906.7" r="3.6" fill="#5072d2" stroke="#1f2f66" stroke-width="0.8"/><circle cx="2259.0" cy="922.6" r="3.6" fill="#5072d2" stroke="#1f2f66" stroke-width="0.8"/><circle cx="2270.0" cy="916.4" r="3.6" fill="#5072d2" stroke="#1f2f66" stroke-width="0.8"/><circle cx="2259.4" cy="893.1" r="3.6" fill="#5072d2" stroke="#1f2f66" stroke-width="0.8"/><circle cx="2261.9" cy="900.7" r="3.6" fill="#5072d2" stroke="#1f2f66" stroke-width="0.8"/><circle cx="2270.7" cy="905.0" r="3.6" fill="#5072d2" stroke="#1f2f66" stroke-width="0.8"/><circle cx="2261.0" cy="890.5" r="3.6" fill="#5072d2" stroke="#1f2f66" stroke-width="0.8"/><circle cx="2260.3" cy="916.7" r="3.6" fill="#5072d2" stroke="#1f2f66" stroke-width="0.8"/><circle cx="2257.7" cy="904.9" r="3.6" fill="#5072d2" stroke="#1f2f66" stroke-width="0.8"/><circle cx="2268.8" cy="884.1" r="3.6" fill="#5072d2" stroke="#1f2f66" stroke-width="0.8"/><circle cx="2265.4" cy="917.7" r="3.6" fill="#5072d2" stroke="#1f2f66" stroke-width="0.8"/><circle cx="2246.9" cy="898.1" r="3.6" fill="#5072d2" stroke="#1f2f66" stroke-width="0.8"/><circle cx="2264.0" cy="892.2" r="3.6" fill="#5072d2" stroke="#1f2f66" stroke-width="0.8"/><circle cx="2269.5" cy="901.3" r="3.6" fill="#5072d2" stroke="#1f2f66" stroke-width="0.8"/><circle cx="2251.8" cy="911.9" r="3.6" fill="#5072d2" stroke="#1f2f66" stroke-width="0.8"/><circle cx="2271.0" cy="913.4" r="3.6" fill="#5072d2" stroke="#1f2f66" stroke-width="0.8"/><circle cx="2278.0" cy="906.3" r="3.6" fill="#5072d2" stroke="#1f2f66" stroke-width="0.8"/><circle cx="2266.1" cy="886.4" r="3.6" fill="#5072d2" stroke="#1f2f66" stroke-width="0.8"/><circle cx="2270.5" cy="894.7" r="3.6" fill="#5072d2" stroke="#1f2f66" stroke-width="0.8"/><circle cx="2260.9" cy="886.8" r="3.6" fill="#5072d2" stroke="#1f2f66" stroke-width="0.8"/><circle cx="2256.3" cy="895.6" r="3.6" fill="#5072d2" stroke="#1f2f66" stroke-width="0.8"/><circle cx="2276.6" cy="877.6" r="3.6" fill="#5072d2" stroke="#1f2f66" stroke-width="0.8"/><circle cx="2251.9" cy="904.9" r="3.6" fill="#5072d2" stroke="#1f2f66" stroke-width="0.8"/><circle cx="2278.0" cy="908.9" r="3.6" fill="#5072d2" stroke="#1f2f66" stroke-width="0.8"/><circle cx="2247.9" cy="871.8" r="3.6" fill="#5072d2" stroke="#1f2f66" stroke-width="0.8"/><circle cx="2268.2" cy="893.2" r="3.6" fill="#5072d2" stroke="#1f2f66" stroke-width="0.8"/><circle cx="2254.9" cy="913.7" r="3.6" fill="#5072d2" stroke="#1f2f66" stroke-width="0.8"/><circle cx="2274.9" cy="903.9" r="3.6" fill="#5072d2" stroke="#1f2f66" stroke-width="0.8"/><circle cx="2267.2" cy="907.2" r="3.6" fill="#5072d2" stroke="#1f2f66" stroke-width="0.8"/><circle cx="2279.3" cy="909.4" r="3.6" fill="#5072d2" stroke="#1f2f66" stroke-width="0.8"/><circle cx="2269.7" cy="908.6" r="3.6" fill="#5072d2" stroke="#1f2f66" stroke-width="0.8"/><circle cx="2250.9" cy="917.4" r="3.6" fill="#5072d2" stroke="#1f2f66" stroke-width="0.8"/><circle cx="2273.6" cy="908.4" r="3.6" fill="#5072d2" stroke="#1f2f66" stroke-width="0.8"/><circle cx="2247.2" cy="894.4" r="3.6" fill="#5072d2" stroke="#1f2f66" stroke-width="0.8"/><circle cx="2272.6" cy="880.3" r="3.6" fill="#5072d2" stroke="#1f2f66" stroke-width="0.8"/><circle cx="2263.3" cy="914.2" r="3.6" fill="#5072d2" stroke="#1f2f66" stroke-width="0.8"/><circle cx="2253.2" cy="921.3" r="3.6" fill="#5072d2" stroke="#1f2f66" stroke-width="0.8"/><circle cx="2270.0" cy="900.2" r="3.6" fill="#5072d2" stroke="#1f2f66" stroke-width="0.8"/><circle cx="2267.9" cy="909.8" r="3.6" fill="#5072d2" stroke="#1f2f66" stroke-width="0.8"/><circle cx="2266.1" cy="915.7" r="3.6" fill="#5072d2" stroke="#1f2f66" stroke-width="0.8"/><circle cx="2259.0" cy="897.0" r="3.6" fill="#5072d2" stroke="#1f2f66" stroke-width="0.8"/><circle cx="2274.4" cy="902.3" r="3.6" fill="#5072d2" stroke="#1f2f66" stroke-width="0.8"/><circle cx="2257.1" cy="913.4" r="3.6" fill="#5072d2" stroke="#1f2f66" stroke-width="0.8"/><circle cx="2278.2" cy="896.7" r="3.6" fill="#5072d2" stroke="#1f2f66" stroke-width="0.8"/><circle cx="2252.6" cy="900.4" r="3.6" fill="#5072d2" stroke="#1f2f66" stroke-width="0.8"/><circle cx="2263.7" cy="898.4" r="3.6" fill="#5072d2" stroke="#1f2f66" stroke-width="0.8"/><circle cx="2277.6" cy="889.7" r="3.6" fill="#5072d2" stroke="#1f2f66" stroke-width="0.8"/><circle cx="2276.3" cy="886.8" r="3.6" fill="#5072d2" stroke="#1f2f66" stroke-width="0.8"/><circle cx="2257.9" cy="909.6" r="3.6" fill="#5072d2" stroke="#1f2f66" stroke-width="0.8"/><circle cx="2275.2" cy="912.3" r="3.6" fill="#5072d2" stroke="#1f2f66" stroke-width="0.8"/><circle cx="2268.1" cy="903.7" r="3.6" fill="#5072d2" stroke="#1f2f66" stroke-width="0.8"/><circle cx="2266.4" cy="908.9" r="3.6" fill="#5072d2" stroke="#1f2f66" stroke-width="0.8"/><circle cx="2263.4" cy="905.3" r="3.6" fill="#5072d2" stroke="#1f2f66" stroke-width="0.8"/><circle cx="2270.2" cy="902.0" r="3.6" fill="#5072d2" stroke="#1f2f66" stroke-width="0.8"/><circle cx="2271.9" cy="908.8" r="3.6" fill="#5072d2" stroke="#1f2f66" stroke-width="0.8"/><circle cx="2283.1" cy="905.9" r="3.6" fill="#5072d2" stroke="#1f2f66" stroke-width="0.8"/><circle cx="2261.2" cy="897.5" r="3.6" fill="#5072d2" stroke="#1f2f66" stroke-width="0.8"/><circle cx="2264.9" cy="913.1" r="3.6" fill="#5072d2" stroke="#1f2f66" stroke-width="0.8"/><circle cx="2262.0" cy="906.6" r="3.6" fill="#5072d2" stroke="#1f2f66" stroke-width="0.8"/><circle cx="2281.5" cy="871.2" r="3.6" fill="#5072d2" stroke="#1f2f66" stroke-width="0.8"/><circle cx="2254.9" cy="904.9" r="3.6" fill="#5072d2" stroke="#1f2f66" stroke-width="0.8"/><circle cx="2268.6" cy="904.9" r="3.6" fill="#5072d2" stroke="#1f2f66" stroke-width="0.8"/><circle cx="2261.1" cy="909.9" r="3.6" fill="#5072d2" stroke="#1f2f66" stroke-width="0.8"/><circle cx="2267.5" cy="895.7" r="3.6" fill="#5072d2" stroke="#1f2f66" stroke-width="0.8"/><circle cx="2286.9" cy="906.3" r="3.6" fill="#5072d2" stroke="#1f2f66" stroke-width="0.8"/><circle cx="2260.0" cy="900.8" r="3.6" fill="#5072d2" stroke="#1f2f66" stroke-width="0.8"/><circle cx="2263.0" cy="901.2" r="3.6" fill="#5072d2" stroke="#1f2f66" stroke-width="0.8"/><circle cx="2240.4" cy="896.2" r="3.6" fill="#5072d2" stroke="#1f2f66" stroke-width="0.8"/><circle cx="2274.1" cy="888.0" r="3.6" fill="#5072d2" stroke="#1f2f66" stroke-width="0.8"/><circle cx="2264.4" cy="913.4" r="3.6" fill="#5072d2" stroke="#1f2f66" stroke-width="0.8"/><circle cx="2272.7" cy="919.9" r="3.6" fill="#5072d2" stroke="#1f2f66" stroke-width="0.8"/><circle cx="2249.7" cy="897.8" r="3.6" fill="#5072d2" stroke="#1f2f66" stroke-width="0.8"/><circle cx="2261.9" cy="909.5" r="3.6" fill="#5072d2" stroke="#1f2f66" stroke-width="0.8"/><circle cx="2274.8" cy="869.8" r="3.6" fill="#5072d2" stroke="#1f2f66" stroke-width="0.8"/><circle cx="2274.8" cy="884.6" r="3.6" fill="#5072d2" stroke="#1f2f66" stroke-width="0.8"/><circle cx="2271.1" cy="884.1" r="3.6" fill="#5072d2" stroke="#1f2f66" stroke-width="0.8"/><circle cx="2266.6" cy="916.3" r="3.6" fill="#5072d2" stroke="#1f2f66" stroke-width="0.8"/><circle cx="2263.7" cy="904.3" r="3.6" fill="#5072d2" stroke="#1f2f66" stroke-width="0.8"/><circle cx="2272.2" cy="903.7" r="3.6" fill="#5072d2" stroke="#1f2f66" stroke-width="0.8"/><circle cx="2264.2" cy="920.4" r="3.6" fill="#5072d2" stroke="#1f2f66" stroke-width="0.8"/><circle cx="2274.4" cy="898.5" r="3.6" fill="#5072d2" stroke="#1f2f66" stroke-width="0.8"/><circle cx="2289.7" cy="888.2" r="3.6" fill="#5072d2" stroke="#1f2f66" stroke-width="0.8"/><circle cx="2273.2" cy="898.8" r="3.6" fill="#5072d2" stroke="#1f2f66" stroke-width="0.8"/><circle cx="2266.2" cy="910.5" r="3.6" fill="#5072d2" stroke="#1f2f66" stroke-width="0.8"/><circle cx="2267.0" cy="909.7" r="3.6" fill="#5072d2" stroke="#1f2f66" stroke-width="0.8"/><circle cx="2251.3" cy="883.9" r="3.6" fill="#5072d2" stroke="#1f2f66" stroke-width="0.8"/><circle cx="2270.5" cy="890.4" r="3.6" fill="#5072d2" stroke="#1f2f66" stroke-width="0.8"/><circle cx="2255.8" cy="884.4" r="3.6" fill="#5072d2" stroke="#1f2f66" stroke-width="0.8"/><circle cx="2276.4" cy="911.0" r="3.6" fill="#5072d2" stroke="#1f2f66" stroke-width="0.8"/><circle cx="2278.3" cy="890.7" r="3.6" fill="#5072d2" stroke="#1f2f66" stroke-width="0.8"/><circle cx="2265.0" cy="888.3" r="3.6" fill="#5072d2" stroke="#1f2f66" stroke-width="0.8"/><circle cx="2271.9" cy="921.1" r="3.6" fill="#5072d2" stroke="#1f2f66" stroke-width="0.8"/><circle cx="2257.0" cy="920.7" r="3.6" fill="#5072d2" stroke="#1f2f66" stroke-width="0.8"/><circle cx="2273.9" cy="899.9" r="3.6" fill="#5072d2" stroke="#1f2f66" stroke-width="0.8"/><circle cx="2247.3" cy="918.9" r="3.6" fill="#5072d2" stroke="#1f2f66" stroke-width="0.8"/><circle cx="2264.1" cy="894.8" r="3.6" fill="#5072d2" stroke="#1f2f66" stroke-width="0.8"/><circle cx="2268.6" cy="906.9" r="3.6" fill="#5072d2" stroke="#1f2f66" stroke-width="0.8"/><circle cx="2278.5" cy="889.8" r="3.6" fill="#5072d2" stroke="#1f2f66" stroke-width="0.8"/><circle cx="2275.2" cy="919.8" r="3.6" fill="#5072d2" stroke="#1f2f66" stroke-width="0.8"/><circle cx="2278.1" cy="899.8" r="3.6" fill="#5072d2" stroke="#1f2f66" stroke-width="0.8"/><circle cx="2258.3" cy="914.2" r="3.6" fill="#5072d2" stroke="#1f2f66" stroke-width="0.8"/><circle cx="2266.0" cy="903.5" r="3.6" fill="#5072d2" stroke="#1f2f66" stroke-width="0.8"/><circle cx="2277.8" cy="898.8" r="3.6" fill="#5072d2" stroke="#1f2f66" stroke-width="0.8"/><circle cx="2244.3" cy="897.4" r="3.6" fill="#5072d2" stroke="#1f2f66" stroke-width="0.8"/><circle cx="2248.3" cy="911.8" r="3.6" fill="#5072d2" stroke="#1f2f66" stroke-width="0.8"/><circle cx="2267.9" cy="894.7" r="3.6" fill="#5072d2" stroke="#1f2f66" stroke-width="0.8"/><circle cx="2264.9" cy="912.0" r="3.6" fill="#5072d2" stroke="#1f2f66" stroke-width="0.8"/><circle cx="2265.7" cy="917.9" r="3.6" fill="#5072d2" stroke="#1f2f66" stroke-width="0.8"/><circle cx="2264.4" cy="914.5" r="3.6" fill="#5072d2" stroke="#1f2f66" stroke-width="0.8"/><circle cx="2278.4" cy="921.3" r="3.6" fill="#5072d2" stroke="#1f2f66" stroke-width="0.8"/><circle cx="2259.0" cy="912.6" r="3.6" fill="#5072d2" stroke="#1f2f66" stroke-width="0.8"/><circle cx="2248.1" cy="889.0" r="3.6" fill="#5072d2" stroke="#1f2f66" stroke-width="0.8"/><circle cx="2247.3" cy="914.8" r="3.6" fill="#5072d2" stroke="#1f2f66" stroke-width="0.8"/><circle cx="2253.9" cy="901.8" r="3.6" fill="#5072d2" stroke="#1f2f66" stroke-width="0.8"/><circle cx="2263.3" cy="901.7" r="3.6" fill="#5072d2" stroke="#1f2f66" stroke-width="0.8"/><circle cx="2259.7" cy="904.8" r="3.6" fill="#5072d2" stroke="#1f2f66" stroke-width="0.8"/><circle cx="2281.1" cy="902.5" r="3.6" fill="#5072d2" stroke="#1f2f66" stroke-width="0.8"/><circle cx="2269.8" cy="914.0" r="3.6" fill="#5072d2" stroke="#1f2f66" stroke-width="0.8"/><circle cx="2263.2" cy="886.9" r="3.6" fill="#5072d2" stroke="#1f2f66" stroke-width="0.8"/><circle cx="2260.0" cy="914.9" r="3.6" fill="#5072d2" stroke="#1f2f66" stroke-width="0.8"/><circle cx="2250.2" cy="894.8" r="3.6" fill="#5072d2" stroke="#1f2f66" stroke-width="0.8"/><circle cx="2274.1" cy="911.5" r="3.6" fill="#5072d2" stroke="#1f2f66" stroke-width="0.8"/><circle cx="2265.1" cy="911.7" r="3.6" fill="#5072d2" stroke="#1f2f66" stroke-width="0.8"/><circle cx="2266.5" cy="887.9" r="3.6" fill="#5072d2" stroke="#1f2f66" stroke-width="0.8"/><circle cx="2250.9" cy="894.3" r="3.6" fill="#5072d2" stroke="#1f2f66" stroke-width="0.8"/><circle cx="2273.3" cy="895.2" r="3.6" fill="#5072d2" stroke="#1f2f66" stroke-width="0.8"/><circle cx="2256.9" cy="892.7" r="3.6" fill="#5072d2" stroke="#1f2f66" stroke-width="0.8"/><circle cx="2251.2" cy="900.6" r="3.6" fill="#5072d2" stroke="#1f2f66" stroke-width="0.8"/><circle cx="2254.4" cy="906.4" r="3.6" fill="#5072d2" stroke="#1f2f66" stroke-width="0.8"/><circle cx="2243.8" cy="905.9" r="3.6" fill="#5072d2" stroke="#1f2f66" stroke-width="0.8"/><circle cx="2259.2" cy="878.7" r="3.6" fill="#5072d2" stroke="#1f2f66" stroke-width="0.8"/><circle cx="2271.5" cy="898.7" r="3.6" fill="#5072d2" stroke="#1f2f66" stroke-width="0.8"/><circle cx="2244.9" cy="891.5" r="3.6" fill="#5072d2" stroke="#1f2f66" stroke-width="0.8"/><circle cx="2267.6" cy="896.5" r="3.6" fill="#5072d2" stroke="#1f2f66" stroke-width="0.8"/><circle cx="2272.0" cy="911.0" r="3.6" fill="#5072d2" stroke="#1f2f66" stroke-width="0.8"/><circle cx="2271.0" cy="905.9" r="3.6" fill="#5072d2" stroke="#1f2f66" stroke-width="0.8"/><circle cx="2277.0" cy="909.9" r="3.6" fill="#5072d2" stroke="#1f2f66" stroke-width="0.8"/><circle cx="2269.1" cy="877.0" r="3.6" fill="#5072d2" stroke="#1f2f66" stroke-width="0.8"/></svg>
<svg class="a" style="left:0;top:0;overflow:visible" width="2878" height="1500"><line x1="2130.1" y1="1269.6" x2="2130.1" y2="1525.6" stroke="#d5d5d5" stroke-width="1" stroke-dasharray="5,4"/><line x1="2056.5" y1="1461.3" x2="2351" y2="1461.3" stroke="#d5d5d5" stroke-width="1" stroke-dasharray="5,4"/><line x1="2277.4" y1="1269.6" x2="2277.4" y2="1525.6" stroke="#d5d5d5" stroke-width="1" stroke-dasharray="5,4"/><line x1="2056.5" y1="1332.7" x2="2351" y2="1332.7" stroke="#d5d5d5" stroke-width="1" stroke-dasharray="5,4"/><line x1="2203.8" y1="1269.6" x2="2203.8" y2="1525.6" stroke="#333" stroke-width="1.6" stroke-dasharray="6,5"/><line x1="2056.5" y1="1397" x2="2351" y2="1397" stroke="#333" stroke-width="1.6" stroke-dasharray="6,5"/><rect x="2056.5" y="1269.6" width="294.5" height="256.0" fill="none" stroke="#a8a8a8" stroke-width="1.2"/><text x="2053.5" y="1272.4" text-anchor="end" font-family="Liberation Sans" font-size="10" fill="#111">25</text><text x="2353" y="1272.4" font-family="Liberation Sans" font-size="10" fill="#111">25</text><text x="2053.5" y="1336.7" text-anchor="end" font-family="Liberation Sans" font-size="10" fill="#111">12.5</text><text x="2353" y="1336.7" font-family="Liberation Sans" font-size="10" fill="#111">12.5</text><text x="2053.5" y="1401.0" text-anchor="end" font-family="Liberation Sans" font-size="10" fill="#111">0</text><text x="2353" y="1401.0" font-family="Liberation Sans" font-size="10" fill="#111">0</text><text x="2053.5" y="1465.3" text-anchor="end" font-family="Liberation Sans" font-size="10" fill="#111">-12.5</text><text x="2353" y="1465.3" font-family="Liberation Sans" font-size="10" fill="#111">-12.5</text><text x="2053.5" y="1529.6" text-anchor="end" font-family="Liberation Sans" font-size="10" fill="#111">-25</text><text x="2353" y="1529.6" font-family="Liberation Sans" font-size="10" fill="#111">-25</text><text x="2056.5" y="1264.6" text-anchor="middle" font-family="Liberation Sans" font-size="10" fill="#111">-25</text><text x="2130.1" y="1264.6" text-anchor="middle" font-family="Liberation Sans" font-size="10" fill="#111">-12.5</text><text x="2203.8" y="1264.6" text-anchor="middle" font-family="Liberation Sans" font-size="10" fill="#111">0</text><text x="2277.4" y="1264.6" text-anchor="middle" font-family="Liberation Sans" font-size="10" fill="#111">12.5</text><text x="2351.0" y="1264.6" text-anchor="middle" font-family="Liberation Sans" font-size="10" fill="#111">25</text><text transform="translate(2381,1397) rotate(90)" text-anchor="middle" font-family="Liberation Sans" font-weight="bold" font-size="10.8" fill="#111">Vertical Break (inches)</text></svg>
<div class="t" style="top:1193.4px;height:20px;line-height:20px;font-size:12.5px;color:#111;font-weight:normal;letter-spacing:0.138px;left:1204.06875px;width:2000px;text-align:center;">PitchType</div>
<svg class="a" style="left:2018px;top:1211px" width="11" height="11"><circle cx="5.5" cy="5.5" r="4.3" fill="#e3e34c" stroke="#888" stroke-width="0.8"/></svg>
<div class="t" style="top:1208.6px;height:16px;line-height:16px;font-size:10.5px;color:#111;font-weight:normal;letter-spacing:-0.12px;left:2034.8px;">Sinker</div>
<svg class="a" style="left:0;top:0;overflow:visible" width="2878" height="1500"><circle cx="2300.8" cy="1385.2" r="3.6" fill="#e3e34c" stroke="#6b6b20" stroke-width="0.8"/><circle cx="2322.9" cy="1375.4" r="3.6" fill="#e3e34c" stroke="#6b6b20" stroke-width="0.8"/><circle cx="2299.7" cy="1380.3" r="3.6" fill="#e3e34c" stroke="#6b6b20" stroke-width="0.8"/><circle cx="2317.8" cy="1393.1" r="3.6" fill="#e3e34c" stroke="#6b6b20" stroke-width="0.8"/><circle cx="2300.8" cy="1366.8" r="3.6" fill="#e3e34c" stroke="#6b6b20" stroke-width="0.8"/><circle cx="2320.1" cy="1386.2" r="3.6" fill="#e3e34c" stroke="#6b6b20" stroke-width="0.8"/><circle cx="2328.3" cy="1391.8" r="3.6" fill="#e3e34c" stroke="#6b6b20" stroke-width="0.8"/><circle cx="2312.0" cy="1378.0" r="3.6" fill="#e3e34c" stroke="#6b6b20" stroke-width="0.8"/><circle cx="2338.7" cy="1377.8" r="3.6" fill="#e3e34c" stroke="#6b6b20" stroke-width="0.8"/><circle cx="2305.2" cy="1368.5" r="3.6" fill="#e3e34c" stroke="#6b6b20" stroke-width="0.8"/><circle cx="2314.0" cy="1382.6" r="3.6" fill="#e3e34c" stroke="#6b6b20" stroke-width="0.8"/><circle cx="2309.6" cy="1380.3" r="3.6" fill="#e3e34c" stroke="#6b6b20" stroke-width="0.8"/><circle cx="2315.7" cy="1388.6" r="3.6" fill="#e3e34c" stroke="#6b6b20" stroke-width="0.8"/><circle cx="2324.0" cy="1383.3" r="3.6" fill="#e3e34c" stroke="#6b6b20" stroke-width="0.8"/><circle cx="2295.1" cy="1388.7" r="3.6" fill="#e3e34c" stroke="#6b6b20" stroke-width="0.8"/><circle cx="2298.8" cy="1379.1" r="3.6" fill="#e3e34c" stroke="#6b6b20" stroke-width="0.8"/><circle cx="2298.3" cy="1381.0" r="3.6" fill="#e3e34c" stroke="#6b6b20" stroke-width="0.8"/><circle cx="2305.2" cy="1383.4" r="3.6" fill="#e3e34c" stroke="#6b6b20" stroke-width="0.8"/><circle cx="2346.0" cy="1380.5" r="3.6" fill="#e3e34c" stroke="#6b6b20" stroke-width="0.8"/><circle cx="2321.4" cy="1366.4" r="3.6" fill="#e3e34c" stroke="#6b6b20" stroke-width="0.8"/><circle cx="2310.1" cy="1388.3" r="3.6" fill="#e3e34c" stroke="#6b6b20" stroke-width="0.8"/><circle cx="2312.1" cy="1385.1" r="3.6" fill="#e3e34c" stroke="#6b6b20" stroke-width="0.8"/><circle cx="2314.0" cy="1369.9" r="3.6" fill="#e3e34c" stroke="#6b6b20" stroke-width="0.8"/><circle cx="2318.6" cy="1372.1" r="3.6" fill="#e3e34c" stroke="#6b6b20" stroke-width="0.8"/><circle cx="2331.7" cy="1375.4" r="3.6" fill="#e3e34c" stroke="#6b6b20" stroke-width="0.8"/><circle cx="2319.9" cy="1381.0" r="3.6" fill="#e3e34c" stroke="#6b6b20" stroke-width="0.8"/><circle cx="2322.5" cy="1374.4" r="3.6" fill="#e3e34c" stroke="#6b6b20" stroke-width="0.8"/><circle cx="2323.0" cy="1379.6" r="3.6" fill="#e3e34c" stroke="#6b6b20" stroke-width="0.8"/><circle cx="2325.6" cy="1387.9" r="3.6" fill="#e3e34c" stroke="#6b6b20" stroke-width="0.8"/><circle cx="2314.4" cy="1372.4" r="3.6" fill="#e3e34c" stroke="#6b6b20" stroke-width="0.8"/><circle cx="2320.7" cy="1386.1" r="3.6" fill="#e3e34c" stroke="#6b6b20" stroke-width="0.8"/><circle cx="2329.4" cy="1376.9" r="3.6" fill="#e3e34c" stroke="#6b6b20" stroke-width="0.8"/><circle cx="2318.5" cy="1386.6" r="3.6" fill="#e3e34c" stroke="#6b6b20" stroke-width="0.8"/><circle cx="2315.8" cy="1383.3" r="3.6" fill="#e3e34c" stroke="#6b6b20" stroke-width="0.8"/><circle cx="2314.8" cy="1374.4" r="3.6" fill="#e3e34c" stroke="#6b6b20" stroke-width="0.8"/><circle cx="2302.9" cy="1376.6" r="3.6" fill="#e3e34c" stroke="#6b6b20" stroke-width="0.8"/><circle cx="2318.9" cy="1397.6" r="3.6" fill="#e3e34c" stroke="#6b6b20" stroke-width="0.8"/><circle cx="2322.8" cy="1392.6" r="3.6" fill="#e3e34c" stroke="#6b6b20" stroke-width="0.8"/><circle cx="2320.8" cy="1388.7" r="3.6" fill="#e3e34c" stroke="#6b6b20" stroke-width="0.8"/><circle cx="2314.8" cy="1389.5" r="3.6" fill="#e3e34c" stroke="#6b6b20" stroke-width="0.8"/><circle cx="2330.7" cy="1377.4" r="3.6" fill="#e3e34c" stroke="#6b6b20" stroke-width="0.8"/><circle cx="2306.1" cy="1402.6" r="3.6" fill="#e3e34c" stroke="#6b6b20" stroke-width="0.8"/><circle cx="2315.4" cy="1391.7" r="3.6" fill="#e3e34c" stroke="#6b6b20" stroke-width="0.8"/><circle cx="2321.7" cy="1368.5" r="3.6" fill="#e3e34c" stroke="#6b6b20" stroke-width="0.8"/><circle cx="2337.3" cy="1400.5" r="3.6" fill="#e3e34c" stroke="#6b6b20" stroke-width="0.8"/><circle cx="2314.8" cy="1389.3" r="3.6" fill="#e3e34c" stroke="#6b6b20" stroke-width="0.8"/><circle cx="2314.3" cy="1371.3" r="3.6" fill="#e3e34c" stroke="#6b6b20" stroke-width="0.8"/><circle cx="2311.9" cy="1385.1" r="3.6" fill="#e3e34c" stroke="#6b6b20" stroke-width="0.8"/><circle cx="2324.2" cy="1388.8" r="3.6" fill="#e3e34c" stroke="#6b6b20" stroke-width="0.8"/><circle cx="2313.6" cy="1395.9" r="3.6" fill="#e3e34c" stroke="#6b6b20" stroke-width="0.8"/><circle cx="2305.4" cy="1389.7" r="3.6" fill="#e3e34c" stroke="#6b6b20" stroke-width="0.8"/><circle cx="2324.1" cy="1377.8" r="3.6" fill="#e3e34c" stroke="#6b6b20" stroke-width="0.8"/><circle cx="2295.1" cy="1371.0" r="3.6" fill="#e3e34c" stroke="#6b6b20" stroke-width="0.8"/><circle cx="2315.4" cy="1386.8" r="3.6" fill="#e3e34c" stroke="#6b6b20" stroke-width="0.8"/><circle cx="2328.5" cy="1370.0" r="3.6" fill="#e3e34c" stroke="#6b6b20" stroke-width="0.8"/><circle cx="2313.0" cy="1388.1" r="3.6" fill="#e3e34c" stroke="#6b6b20" stroke-width="0.8"/><circle cx="2311.4" cy="1354.9" r="3.6" fill="#e3e34c" stroke="#6b6b20" stroke-width="0.8"/><circle cx="2321.1" cy="1406.4" r="3.6" fill="#e3e34c" stroke="#6b6b20" stroke-width="0.8"/><circle cx="2323.0" cy="1370.9" r="3.6" fill="#e3e34c" stroke="#6b6b20" stroke-width="0.8"/><circle cx="2308.9" cy="1383.4" r="3.6" fill="#e3e34c" stroke="#6b6b20" stroke-width="0.8"/><circle cx="2337.9" cy="1387.8" r="3.6" fill="#e3e34c" stroke="#6b6b20" stroke-width="0.8"/><circle cx="2314.1" cy="1398.1" r="3.6" fill="#e3e34c" stroke="#6b6b20" stroke-width="0.8"/><circle cx="2312.2" cy="1401.5" r="3.6" fill="#e3e34c" stroke="#6b6b20" stroke-width="0.8"/><circle cx="2306.1" cy="1375.8" r="3.6" fill="#e3e34c" stroke="#6b6b20" stroke-width="0.8"/><circle cx="2320.2" cy="1396.7" r="3.6" fill="#e3e34c" stroke="#6b6b20" stroke-width="0.8"/><circle cx="2319.5" cy="1384.3" r="3.6" fill="#e3e34c" stroke="#6b6b20" stroke-width="0.8"/><circle cx="2294.8" cy="1373.2" r="3.6" fill="#e3e34c" stroke="#6b6b20" stroke-width="0.8"/><circle cx="2306.9" cy="1375.1" r="3.6" fill="#e3e34c" stroke="#6b6b20" stroke-width="0.8"/><circle cx="2318.9" cy="1377.3" r="3.6" fill="#e3e34c" stroke="#6b6b20" stroke-width="0.8"/><circle cx="2320.9" cy="1381.9" r="3.6" fill="#e3e34c" stroke="#6b6b20" stroke-width="0.8"/><circle cx="2309.7" cy="1382.3" r="3.6" fill="#e3e34c" stroke="#6b6b20" stroke-width="0.8"/><circle cx="2317.3" cy="1390.4" r="3.6" fill="#e3e34c" stroke="#6b6b20" stroke-width="0.8"/><circle cx="2308.2" cy="1378.4" r="3.6" fill="#e3e34c" stroke="#6b6b20" stroke-width="0.8"/><circle cx="2299.4" cy="1398.6" r="3.6" fill="#e3e34c" stroke="#6b6b20" stroke-width="0.8"/><circle cx="2327.5" cy="1379.0" r="3.6" fill="#e3e34c" stroke="#6b6b20" stroke-width="0.8"/><circle cx="2308.2" cy="1367.4" r="3.6" fill="#e3e34c" stroke="#6b6b20" stroke-width="0.8"/><circle cx="2314.7" cy="1383.3" r="3.6" fill="#e3e34c" stroke="#6b6b20" stroke-width="0.8"/><circle cx="2334.8" cy="1383.7" r="3.6" fill="#e3e34c" stroke="#6b6b20" stroke-width="0.8"/><circle cx="2305.2" cy="1354.1" r="3.6" fill="#e3e34c" stroke="#6b6b20" stroke-width="0.8"/><circle cx="2327.1" cy="1383.1" r="3.6" fill="#e3e34c" stroke="#6b6b20" stroke-width="0.8"/><circle cx="2296.9" cy="1383.0" r="3.6" fill="#e3e34c" stroke="#6b6b20" stroke-width="0.8"/><circle cx="2296.9" cy="1419.3" r="3.6" fill="#e3e34c" stroke="#6b6b20" stroke-width="0.8"/><circle cx="2324.2" cy="1387.3" r="3.6" fill="#e3e34c" stroke="#6b6b20" stroke-width="0.8"/><circle cx="2311.2" cy="1357.5" r="3.6" fill="#e3e34c" stroke="#6b6b20" stroke-width="0.8"/><circle cx="2311.7" cy="1363.9" r="3.6" fill="#e3e34c" stroke="#6b6b20" stroke-width="0.8"/><circle cx="2319.0" cy="1357.5" r="3.6" fill="#e3e34c" stroke="#6b6b20" stroke-width="0.8"/><circle cx="2303.9" cy="1394.4" r="3.6" fill="#e3e34c" stroke="#6b6b20" stroke-width="0.8"/><circle cx="2329.4" cy="1368.0" r="3.6" fill="#e3e34c" stroke="#6b6b20" stroke-width="0.8"/><circle cx="2297.7" cy="1390.7" r="3.6" fill="#e3e34c" stroke="#6b6b20" stroke-width="0.8"/><circle cx="2321.5" cy="1370.1" r="3.6" fill="#e3e34c" stroke="#6b6b20" stroke-width="0.8"/><circle cx="2306.1" cy="1373.4" r="3.6" fill="#e3e34c" stroke="#6b6b20" stroke-width="0.8"/><circle cx="2301.1" cy="1373.5" r="3.6" fill="#e3e34c" stroke="#6b6b20" stroke-width="0.8"/><circle cx="2325.5" cy="1388.6" r="3.6" fill="#e3e34c" stroke="#6b6b20" stroke-width="0.8"/><circle cx="2333.6" cy="1380.1" r="3.6" fill="#e3e34c" stroke="#6b6b20" stroke-width="0.8"/><circle cx="2311.6" cy="1370.2" r="3.6" fill="#e3e34c" stroke="#6b6b20" stroke-width="0.8"/><circle cx="2311.8" cy="1366.6" r="3.6" fill="#e3e34c" stroke="#6b6b20" stroke-width="0.8"/><circle cx="2295.2" cy="1388.7" r="3.6" fill="#e3e34c" stroke="#6b6b20" stroke-width="0.8"/><circle cx="2327.4" cy="1390.2" r="3.6" fill="#e3e34c" stroke="#6b6b20" stroke-width="0.8"/><circle cx="2326.3" cy="1383.8" r="3.6" fill="#e3e34c" stroke="#6b6b20" stroke-width="0.8"/><circle cx="2305.8" cy="1381.9" r="3.6" fill="#e3e34c" stroke="#6b6b20" stroke-width="0.8"/><circle cx="2309.3" cy="1368.8" r="3.6" fill="#e3e34c" stroke="#6b6b20" stroke-width="0.8"/><circle cx="2296.1" cy="1364.7" r="3.6" fill="#e3e34c" stroke="#6b6b20" stroke-width="0.8"/><circle cx="2312.9" cy="1382.7" r="3.6" fill="#e3e34c" stroke="#6b6b20" stroke-width="0.8"/><circle cx="2308.3" cy="1396.7" r="3.6" fill="#e3e34c" stroke="#6b6b20" stroke-width="0.8"/><circle cx="2314.8" cy="1387.4" r="3.6" fill="#e3e34c" stroke="#6b6b20" stroke-width="0.8"/><circle cx="2325.2" cy="1372.0" r="3.6" fill="#e3e34c" stroke="#6b6b20" stroke-width="0.8"/><circle cx="2293.3" cy="1389.3" r="3.6" fill="#e3e34c" stroke="#6b6b20" stroke-width="0.8"/><circle cx="2306.1" cy="1395.4" r="3.6" fill="#e3e34c" stroke="#6b6b20" stroke-width="0.8"/><circle cx="2316.4" cy="1392.1" r="3.6" fill="#e3e34c" stroke="#6b6b20" stroke-width="0.8"/><circle cx="2320.6" cy="1358.1" r="3.6" fill="#e3e34c" stroke="#6b6b20" stroke-width="0.8"/><circle cx="2320.2" cy="1373.6" r="3.6" fill="#e3e34c" stroke="#6b6b20" stroke-width="0.8"/><circle cx="2305.4" cy="1376.2" r="3.6" fill="#e3e34c" stroke="#6b6b20" stroke-width="0.8"/><circle cx="2320.7" cy="1390.7" r="3.6" fill="#e3e34c" stroke="#6b6b20" stroke-width="0.8"/><circle cx="2323.1" cy="1362.7" r="3.6" fill="#e3e34c" stroke="#6b6b20" stroke-width="0.8"/><circle cx="2307.1" cy="1354.9" r="3.6" fill="#e3e34c" stroke="#6b6b20" stroke-width="0.8"/><circle cx="2312.0" cy="1387.6" r="3.6" fill="#e3e34c" stroke="#6b6b20" stroke-width="0.8"/><circle cx="2305.4" cy="1383.7" r="3.6" fill="#e3e34c" stroke="#6b6b20" stroke-width="0.8"/><circle cx="2315.3" cy="1392.1" r="3.6" fill="#e3e34c" stroke="#6b6b20" stroke-width="0.8"/><circle cx="2304.8" cy="1371.9" r="3.6" fill="#e3e34c" stroke="#6b6b20" stroke-width="0.8"/><circle cx="2305.4" cy="1400.3" r="3.6" fill="#e3e34c" stroke="#6b6b20" stroke-width="0.8"/><circle cx="2323.9" cy="1379.6" r="3.6" fill="#e3e34c" stroke="#6b6b20" stroke-width="0.8"/><circle cx="2315.3" cy="1382.3" r="3.6" fill="#e3e34c" stroke="#6b6b20" stroke-width="0.8"/><circle cx="2315.0" cy="1378.7" r="3.6" fill="#e3e34c" stroke="#6b6b20" stroke-width="0.8"/><circle cx="2309.7" cy="1367.2" r="3.6" fill="#e3e34c" stroke="#6b6b20" stroke-width="0.8"/><circle cx="2306.6" cy="1399.2" r="3.6" fill="#e3e34c" stroke="#6b6b20" stroke-width="0.8"/><circle cx="2318.4" cy="1381.7" r="3.6" fill="#e3e34c" stroke="#6b6b20" stroke-width="0.8"/><circle cx="2310.9" cy="1381.7" r="3.6" fill="#e3e34c" stroke="#6b6b20" stroke-width="0.8"/><circle cx="2316.5" cy="1373.9" r="3.6" fill="#e3e34c" stroke="#6b6b20" stroke-width="0.8"/><circle cx="2315.0" cy="1383.6" r="3.6" fill="#e3e34c" stroke="#6b6b20" stroke-width="0.8"/><circle cx="2305.5" cy="1372.3" r="3.6" fill="#e3e34c" stroke="#6b6b20" stroke-width="0.8"/><circle cx="2303.0" cy="1369.3" r="3.6" fill="#e3e34c" stroke="#6b6b20" stroke-width="0.8"/><circle cx="2321.9" cy="1355.0" r="3.6" fill="#e3e34c" stroke="#6b6b20" stroke-width="0.8"/><circle cx="2310.3" cy="1374.3" r="3.6" fill="#e3e34c" stroke="#6b6b20" stroke-width="0.8"/><circle cx="2306.8" cy="1382.1" r="3.6" fill="#e3e34c" stroke="#6b6b20" stroke-width="0.8"/><circle cx="2324.3" cy="1381.8" r="3.6" fill="#e3e34c" stroke="#6b6b20" stroke-width="0.8"/><circle cx="2311.6" cy="1374.3" r="3.6" fill="#e3e34c" stroke="#6b6b20" stroke-width="0.8"/><circle cx="2311.7" cy="1391.0" r="3.6" fill="#e3e34c" stroke="#6b6b20" stroke-width="0.8"/><circle cx="2309.1" cy="1368.4" r="3.6" fill="#e3e34c" stroke="#6b6b20" stroke-width="0.8"/><circle cx="2300.4" cy="1368.8" r="3.6" fill="#e3e34c" stroke="#6b6b20" stroke-width="0.8"/><circle cx="2299.1" cy="1393.1" r="3.6" fill="#e3e34c" stroke="#6b6b20" stroke-width="0.8"/><circle cx="2316.6" cy="1378.4" r="3.6" fill="#e3e34c" stroke="#6b6b20" stroke-width="0.8"/><circle cx="2327.6" cy="1373.8" r="3.6" fill="#e3e34c" stroke="#6b6b20" stroke-width="0.8"/><circle cx="2320.5" cy="1389.8" r="3.6" fill="#e3e34c" stroke="#6b6b20" stroke-width="0.8"/><circle cx="2297.5" cy="1363.9" r="3.6" fill="#e3e34c" stroke="#6b6b20" stroke-width="0.8"/><circle cx="2303.7" cy="1391.0" r="3.6" fill="#e3e34c" stroke="#6b6b20" stroke-width="0.8"/><circle cx="2326.0" cy="1367.5" r="3.6" fill="#e3e34c" stroke="#6b6b20" stroke-width="0.8"/><circle cx="2323.5" cy="1376.8" r="3.6" fill="#e3e34c" stroke="#6b6b20" stroke-width="0.8"/><circle cx="2309.1" cy="1374.9" r="3.6" fill="#e3e34c" stroke="#6b6b20" stroke-width="0.8"/><circle cx="2309.8" cy="1361.0" r="3.6" fill="#e3e34c" stroke="#6b6b20" stroke-width="0.8"/><circle cx="2303.0" cy="1367.4" r="3.6" fill="#e3e34c" stroke="#6b6b20" stroke-width="0.8"/><circle cx="2317.9" cy="1404.0" r="3.6" fill="#e3e34c" stroke="#6b6b20" stroke-width="0.8"/><circle cx="2340.3" cy="1377.3" r="3.6" fill="#e3e34c" stroke="#6b6b20" stroke-width="0.8"/><circle cx="2295.8" cy="1376.5" r="3.6" fill="#e3e34c" stroke="#6b6b20" stroke-width="0.8"/><circle cx="2303.6" cy="1402.8" r="3.6" fill="#e3e34c" stroke="#6b6b20" stroke-width="0.8"/><circle cx="2318.7" cy="1373.0" r="3.6" fill="#e3e34c" stroke="#6b6b20" stroke-width="0.8"/><circle cx="2322.4" cy="1386.9" r="3.6" fill="#e3e34c" stroke="#6b6b20" stroke-width="0.8"/><circle cx="2296.7" cy="1375.2" r="3.6" fill="#e3e34c" stroke="#6b6b20" stroke-width="0.8"/><circle cx="2310.6" cy="1381.2" r="3.6" fill="#e3e34c" stroke="#6b6b20" stroke-width="0.8"/><circle cx="2314.3" cy="1377.3" r="3.6" fill="#e3e34c" stroke="#6b6b20" stroke-width="0.8"/><circle cx="2314.9" cy="1374.6" r="3.6" fill="#e3e34c" stroke="#6b6b20" stroke-width="0.8"/><circle cx="2304.0" cy="1397.7" r="3.6" fill="#e3e34c" stroke="#6b6b20" stroke-width="0.8"/><circle cx="2316.6" cy="1385.8" r="3.6" fill="#e3e34c" stroke="#6b6b20" stroke-width="0.8"/><circle cx="2297.1" cy="1379.2" r="3.6" fill="#e3e34c" stroke="#6b6b20" stroke-width="0.8"/><circle cx="2321.2" cy="1366.8" r="3.6" fill="#e3e34c" stroke="#6b6b20" stroke-width="0.8"/><circle cx="2324.0" cy="1376.7" r="3.6" fill="#e3e34c" stroke="#6b6b20" stroke-width="0.8"/><circle cx="2317.0" cy="1379.5" r="3.6" fill="#e3e34c" stroke="#6b6b20" stroke-width="0.8"/><circle cx="2315.2" cy="1394.2" r="3.6" fill="#e3e34c" stroke="#6b6b20" stroke-width="0.8"/><circle cx="2309.0" cy="1398.2" r="3.6" fill="#e3e34c" stroke="#6b6b20" stroke-width="0.8"/><circle cx="2305.2" cy="1370.8" r="3.6" fill="#e3e34c" stroke="#6b6b20" stroke-width="0.8"/><circle cx="2320.1" cy="1369.3" r="3.6" fill="#e3e34c" stroke="#6b6b20" stroke-width="0.8"/></svg>
<svg class="a" style="left:0;top:0;overflow:visible" width="2878" height="1500"><defs><filter id="bl1" x="-20%" y="-20%" width="140%" height="140%"><feGaussianBlur stdDeviation="5.5"/></filter><filter id="bs1" x="-50%" y="-50%" width="200%" height="200%"><feGaussianBlur stdDeviation="4"/></filter><clipPath id="cp1"><rect x="2551" y="840" width="252" height="230"/></clipPath><linearGradient id="lg1" x1="0" x2="1"><stop offset="0" stop-color="#3f75b6"/><stop offset="0.3" stop-color="#8ab6db"/><stop offset="0.5" stop-color="#fbf8dc"/><stop offset="0.72" stop-color="#ec9a56"/><stop offset="1" stop-color="#cf2b2a"/></linearGradient><linearGradient id="leg1" x1="0" y1="0" x2="0" y2="1"><stop offset="0" stop-color="#151515"/><stop offset="0.55" stop-color="#0c0c0c"/><stop offset="1" stop-color="#9a9a9a"/></linearGradient></defs><g clip-path="url(#cp1)"><g filter="url(#bl1)"><circle cx="2575.7" cy="865.7" r="36" fill="#6b9ccc"/><circle cx="2572" cy="889" r="20" fill="#6b9ccc"/><circle cx="2593.6" cy="937" r="27" fill="#6b9ccc"/><circle cx="2592" cy="958.7" r="16" fill="#6b9ccc"/><circle cx="2647" cy="874.7" r="18" fill="#6b9ccc"/><circle cx="2736.6" cy="865.7" r="32" fill="#6b9ccc"/><circle cx="2754.4" cy="910.4" r="27" fill="#6b9ccc"/><circle cx="2772.3" cy="946" r="27" fill="#6b9ccc"/><circle cx="2790" cy="982" r="21" fill="#6b9ccc"/><circle cx="2797" cy="1005" r="11" fill="#6b9ccc"/><circle cx="2665" cy="990.8" r="28" fill="#6b9ccc"/><circle cx="2700.8" cy="1008.7" r="21" fill="#6b9ccc"/><circle cx="2695.5" cy="1049.8" r="11" fill="#6b9ccc"/><circle cx="2618.6" cy="1035.5" r="11" fill="#6b9ccc"/><circle cx="2638" cy="946" r="21" fill="#6b9ccc"/><circle cx="2709.8" cy="848" r="18" fill="#6b9ccc"/><circle cx="2556" cy="850" r="16" fill="#6b9ccc"/><circle cx="2727.6" cy="973" r="18" fill="#6b9ccc"/><circle cx="2736.6" cy="1008.7" r="16" fill="#6b9ccc"/><circle cx="2610" cy="900" r="20" fill="#6b9ccc"/><circle cx="2683" cy="1025" r="14" fill="#6b9ccc"/><circle cx="2640" cy="1018" r="12" fill="#6b9ccc"/><circle cx="2760" cy="870" r="20" fill="#6b9ccc"/><circle cx="2690" cy="850" r="14" fill="#6b9ccc"/><circle cx="2640" cy="975" r="13" fill="#6b9ccc"/><circle cx="2662" cy="1000" r="12" fill="#6b9ccc"/><circle cx="2625" cy="960" r="10" fill="#6b9ccc"/><circle cx="2640" cy="857" r="8" fill="#a9cae6"/><circle cx="2763.4" cy="973" r="9" fill="#a9cae6"/><circle cx="2625.8" cy="946" r="7" fill="#a9cae6"/><circle cx="2656" cy="990.8" r="7" fill="#a9cae6"/><circle cx="2751" cy="887" r="7" fill="#a9cae6"/><circle cx="2602.5" cy="910" r="7" fill="#a9cae6"/><circle cx="2590" cy="925" r="6" fill="#a9cae6"/><circle cx="2776" cy="955" r="6" fill="#a9cae6"/><circle cx="2580" cy="870" r="7" fill="#a9cae6"/><circle cx="2740" cy="850" r="7" fill="#a9cae6"/><circle cx="2785" cy="915" r="6" fill="#a9cae6"/><circle cx="2700" cy="1000" r="6" fill="#a9cae6"/><circle cx="2630" cy="1010" r="7" fill="#a9cae6"/><circle cx="2770" cy="1000" r="5" fill="#a9cae6"/><circle cx="2560" cy="900" r="5" fill="#a9cae6"/><ellipse cx="2709.8" cy="856.8" rx="8" ry="6" fill="#f6f4d8"/><ellipse cx="2768" cy="972" rx="12" ry="9" fill="#f6f4d8"/></g><g filter="url(#bs1)"><path d="M2611.5 853.0 L2625.8 849.7 L2633.0 862.0 L2647.0 871.0 L2658.0 849.7 L2679.0 844.3 L2690.0 856.8 L2692.0 883.6 L2706.0 889.0 L2718.7 887.0 L2720.5 910.4 L2717.0 946.0 L2704.4 955.0 L2700.8 982.0 L2690.0 985.5 L2681.0 969.4 L2679.4 951.5 L2656.0 946.0 L2647.0 924.7 L2654.4 905.0 L2640.0 892.5 L2617.0 883.6 L2609.7 869.3 Z" fill="#f6f4d8" stroke="#f6f4d8" stroke-width="16" stroke-linejoin="round"/><path d="M2736 926 a11 11 0 1 0 22 0 a11 11 0 1 0 -22 0 Z" fill="#f6f4d8" stroke="#f6f4d8" stroke-width="16" stroke-linejoin="round"/><path d="M2720 985 Q2722 968 2740 966 Q2752 970 2748 980 Q2738 995 2720 985 Z" fill="#f6f4d8" stroke="#f6f4d8" stroke-width="16" stroke-linejoin="round"/><path d="M2611.5 853.0 L2625.8 849.7 L2633.0 862.0 L2647.0 871.0 L2658.0 849.7 L2679.0 844.3 L2690.0 856.8 L2692.0 883.6 L2706.0 889.0 L2718.7 887.0 L2720.5 910.4 L2717.0 946.0 L2704.4 955.0 L2700.8 982.0 L2690.0 985.5 L2681.0 969.4 L2679.4 951.5 L2656.0 946.0 L2647.0 924.7 L2654.4 905.0 L2640.0 892.5 L2617.0 883.6 L2609.7 869.3 Z" fill="#eb9a5c" stroke="#eb9a5c" stroke-width="2" stroke-linejoin="round"/><path d="M2736 926 a11 11 0 1 0 22 0 a11 11 0 1 0 -22 0 Z" fill="#eb9a5c" stroke="#eb9a5c" stroke-width="2" stroke-linejoin="round"/><path d="M2720 985 Q2722 968 2740 966 Q2752 970 2748 980 Q2738 995 2720 985 Z" fill="#eb9a5c" stroke="#eb9a5c" stroke-width="2" stroke-linejoin="round"/><path d="M2660.0 862.0 L2686.0 858.0 L2690.0 885.0 L2700.0 905.0 L2716.0 912.0 L2714.0 938.0 L2700.0 944.0 L2686.0 930.0 L2676.0 940.0 L2655.0 938.0 L2652.0 912.0 L2668.0 898.0 Z" fill="#d03a2e" stroke="#d03a2e" stroke-width="3" stroke-linejoin="round"/><path d="M2741 926 a6 6 0 1 0 12 0 a6 6 0 1 0 -12 0 Z" fill="#d03a2e" stroke="#d03a2e" stroke-width="3" stroke-linejoin="round"/></g></g><rect x="2621" y="914.8" width="110" height="109.2" fill="none" stroke="#000" stroke-width="2.8"/><g stroke="#000" stroke-width="1.8" stroke-dasharray="3,3"><line x1="2621" y1="896" x2="2731" y2="896"/><line x1="2621" y1="1043" x2="2731" y2="1043"/><line x1="2602" y1="915" x2="2602" y2="1024"/><line x1="2750" y1="915" x2="2750" y2="1024"/></g><rect x="2551.5" y="766" width="248" height="67.5" fill="#fff" stroke="#111" stroke-width="1.8"/><rect x="2556" y="822" width="241" height="8" fill="url(#lg1)"/><text x="2675.6" y="791.5" text-anchor="middle" font-family="Liberation Sans" font-size="22.8" fill="#111">Pitch Frequency</text><text x="2555.5" y="819" font-family="Liberation Sans" font-weight="bold" font-size="13.6" fill="#111">Least</text><text x="2795" y="819" text-anchor="end" font-family="Liberation Sans" font-weight="bold" font-size="13.6" fill="#111">Most</text><g transform="translate(0,0)" stroke-linejoin="round"><path d="M2466.7 957 L2510 968 L2523 1024 L2517 1091 L2533 1100 L2530 1108 L2521 1120 L2471 1120 L2478.6 1095 L2493 1038 L2466.7 991 Z" fill="url(#leg1)" stroke="#bdbdbd" stroke-width="1.2"/><path d="M2485.7 867 L2506 862 L2528.6 884 L2523 930 L2512 962 L2469 950 L2469 943 Z" fill="#262626" stroke="#bdbdbd" stroke-width="1.2"/><path d="M2480 885 L2510 872 L2520 900 L2492 920 Z" fill="#555"/><path d="M2468 952 L2510 963 L2509 968 L2467 957 Z" fill="#e6e6e6"/><path d="M2528 858 L2545 852 L2554 870 L2557 912 L2545 915 L2538 900 L2532 880 Z" fill="#8a8a8a" stroke="#c8c8c8" stroke-width="1"/><path d="M2543 879 L2555 878 L2556 889 L2544 890 Z" fill="#eee"/><path d="M2466 824 L2466 832 L2539 861 L2542 852 Z" fill="#d2d2d2" stroke="#b0b0b0" stroke-width="0.8"/><path d="M2466 827 L2539 856" stroke="#f2f2f2" stroke-width="2"/><ellipse cx="2521" cy="848" rx="13.5" ry="16" fill="#a9a9a9"/><path d="M2507.5 846 Q2508 831 2521 831 Q2534.5 831 2534.5 846 L2522 842 Z" fill="#3c3c3c"/><path d="M2493 879 L2528 853 L2538 860 L2500 890 Z" fill="#333" stroke="#777" stroke-width="1"/><circle cx="2534" cy="855" r="5" fill="#555"/></g><line x1="2466" y1="1102" x2="2592" y2="1102" stroke="#c8c8c8" stroke-width="1.2"/><path d="M2570 1122 L2585 1102 L2593 1102 L2580 1122 Z" fill="#000"/><path d="M2623 1112 L2728 1112 L2728 1115 Q2675 1120 2623 1115 Z" fill="#000"/><path d="M2759 1102 L2767 1102 L2781 1122 L2771 1122 Z" fill="#000"/><text x="2779" y="1118.5" font-family="Liberation Sans" font-size="11.5" fill="#111">© TRUMEDIA 2024</text></svg>
<svg class="a" style="left:0;top:0;overflow:visible" width="2878" height="1500"><defs><filter id="bl2" x="-20%" y="-20%" width="140%" height="140%"><feGaussianBlur stdDeviation="5.5"/></filter><filter id="bs2" x="-50%" y="-50%" width="200%" height="200%"><feGaussianBlur stdDeviation="4"/></filter><clipPath id="cp2"><rect x="2551" y="1270" width="252" height="230"/></clipPath><linearGradient id="lg2" x1="0" x2="1"><stop offset="0" stop-color="#3f75b6"/><stop offset="0.3" stop-color="#8ab6db"/><stop offset="0.5" stop-color="#fbf8dc"/><stop offset="0.72" stop-color="#ec9a56"/><stop offset="1" stop-color="#cf2b2a"/></linearGradient><linearGradient id="leg2" x1="0" y1="0" x2="0" y2="1"><stop offset="0" stop-color="#151515"/><stop offset="0.55" stop-color="#0c0c0c"/><stop offset="1" stop-color="#9a9a9a"/></linearGradient></defs><g clip-path="url(#cp2)"><g filter="url(#bl2)"><circle cx="2566.8" cy="1345" r="24" fill="#6b9ccc"/><circle cx="2580" cy="1320" r="18" fill="#6b9ccc"/><circle cx="2610" cy="1310" r="14" fill="#6b9ccc"/><circle cx="2650" cy="1316" r="24" fill="#6b9ccc"/><circle cx="2692" cy="1320" r="26" fill="#6b9ccc"/><circle cx="2712" cy="1335" r="20" fill="#6b9ccc"/><circle cx="2740" cy="1360" r="20" fill="#6b9ccc"/><circle cx="2772" cy="1385" r="26" fill="#6b9ccc"/><circle cx="2795" cy="1410" r="20" fill="#6b9ccc"/><circle cx="2795" cy="1460" r="22" fill="#6b9ccc"/><circle cx="2760" cy="1470" r="30" fill="#6b9ccc"/><circle cx="2710" cy="1480" r="30" fill="#6b9ccc"/><circle cx="2650" cy="1480" r="30" fill="#6b9ccc"/><circle cx="2590" cy="1470" r="34" fill="#6b9ccc"/><circle cx="2566" cy="1420" r="28" fill="#6b9ccc"/><circle cx="2566" cy="1480" r="24" fill="#6b9ccc"/><circle cx="2620" cy="1350" r="24" fill="#6b9ccc"/><circle cx="2760" cy="1420" r="24" fill="#6b9ccc"/><circle cx="2680" cy="1350" r="16" fill="#6b9ccc"/><circle cx="2800" cy="1500" r="16" fill="#6b9ccc"/><circle cx="2650" cy="1362" r="15" fill="#6b9ccc"/><circle cx="2700" cy="1362" r="15" fill="#6b9ccc"/><circle cx="2740" cy="1392" r="13" fill="#6b9ccc"/><circle cx="2600" cy="1376" r="13" fill="#6b9ccc"/><circle cx="2625" cy="1350" r="12" fill="#6b9ccc"/><circle cx="2611.5" cy="1286.8" r="11" fill="#a9cae6"/><circle cx="2600" cy="1307" r="12" fill="#a9cae6"/><circle cx="2585" cy="1355" r="9" fill="#a9cae6"/><circle cx="2560" cy="1300" r="8" fill="#a9cae6"/><circle cx="2790" cy="1385" r="6" fill="#a9cae6"/><circle cx="2575" cy="1440" r="8" fill="#a9cae6"/><circle cx="2770" cy="1440" r="9" fill="#a9cae6"/><circle cx="2745" cy="1470" r="7" fill="#a9cae6"/><circle cx="2580" cy="1480" r="9" fill="#a9cae6"/><circle cx="2720" cy="1335" r="6" fill="#a9cae6"/><circle cx="2640" cy="1330" r="7" fill="#a9cae6"/><circle cx="2790" cy="1480" r="7" fill="#a9cae6"/></g><g filter="url(#bs2)"><path d="M2587.8 1394.5 L2606.8 1382.6 L2630.7 1377.8 L2647.0 1377.8 L2666.4 1389.7 L2690.0 1389.7 L2714.0 1394.5 L2723.6 1408.8 L2721.0 1427.9 L2733.0 1432.6 L2730.8 1449.3 L2702.0 1461.2 L2678.3 1466.0 L2649.7 1461.2 L2626.0 1454.0 L2618.7 1432.6 L2602.0 1418.3 L2585.4 1408.8 Z" fill="#f6f4d8" stroke="#f6f4d8" stroke-width="16" stroke-linejoin="round"/><path d="M2587.8 1394.5 L2606.8 1382.6 L2630.7 1377.8 L2647.0 1377.8 L2666.4 1389.7 L2690.0 1389.7 L2714.0 1394.5 L2723.6 1408.8 L2721.0 1427.9 L2733.0 1432.6 L2730.8 1449.3 L2702.0 1461.2 L2678.3 1466.0 L2649.7 1461.2 L2626.0 1454.0 L2618.7 1432.6 L2602.0 1418.3 L2585.4 1408.8 Z" fill="#eb9a5c" stroke="#eb9a5c" stroke-width="2" stroke-linejoin="round"/><path d="M2626.0 1408.8 L2642.6 1394.5 L2666.4 1401.6 L2702.0 1408.8 L2723.6 1430.0 L2714.0 1444.5 L2678.3 1444.5 L2642.6 1439.8 L2623.5 1427.9 Z" fill="#d03a2e" stroke="#d03a2e" stroke-width="3" stroke-linejoin="round"/></g></g><rect x="2621" y="1344.8" width="110" height="109.2" fill="none" stroke="#000" stroke-width="2.8"/><g stroke="#000" stroke-width="1.8" stroke-dasharray="3,3"><line x1="2621" y1="1326" x2="2731" y2="1326"/><line x1="2621" y1="1473" x2="2731" y2="1473"/><line x1="2602" y1="1345" x2="2602" y2="1454"/><line x1="2750" y1="1345" x2="2750" y2="1454"/></g><rect x="2551.5" y="1196" width="248" height="67.5" fill="#fff" stroke="#111" stroke-width="1.8"/><rect x="2556" y="1252" width="241" height="8" fill="url(#lg2)"/><text x="2675.6" y="1221.5" text-anchor="middle" font-family="Liberation Sans" font-size="22.8" fill="#111">Pitch Frequency</text><text x="2555.5" y="1249" font-family="Liberation Sans" font-weight="bold" font-size="13.6" fill="#111">Least</text><text x="2795" y="1249" text-anchor="end" font-family="Liberation Sans" font-weight="bold" font-size="13.6" fill="#111">Most</text><g transform="translate(0,430)" stroke-linejoin="round"><path d="M2466.7 957 L2510 968 L2523 1024 L2517 1091 L2533 1100 L2530 1108 L2521 1120 L2471 1120 L2478.6 1095 L2493 1038 L2466.7 991 Z" fill="url(#leg2)" stroke="#bdbdbd" stroke-width="1.2"/><path d="M2485.7 867 L2506 862 L2528.6 884 L2523 930 L2512 962 L2469 950 L2469 943 Z" fill="#262626" stroke="#bdbdbd" stroke-width="1.2"/><path d="M2480 885 L2510 872 L2520 900 L2492 920 Z" fill="#555"/><path d="M2468 952 L2510 963 L2509 968 L2467 957 Z" fill="#e6e6e6"/><path d="M2528 858 L2545 852 L2554 870 L2557 912 L2545 915 L2538 900 L2532 880 Z" fill="#8a8a8a" stroke="#c8c8c8" stroke-width="1"/><path d="M2543 879 L2555 878 L2556 889 L2544 890 Z" fill="#eee"/><path d="M2466 824 L2466 832 L2539 861 L2542 852 Z" fill="#d2d2d2" stroke="#b0b0b0" stroke-width="0.8"/><path d="M2466 827 L2539 856" stroke="#f2f2f2" stroke-width="2"/><ellipse cx="2521" cy="848" rx="13.5" ry="16" fill="#a9a9a9"/><path d="M2507.5 846 Q2508 831 2521 831 Q2534.5 831 2534.5 846 L2522 842 Z" fill="#3c3c3c"/><path d="M2493 879 L2528 853 L2538 860 L2500 890 Z" fill="#333" stroke="#777" stroke-width="1"/><circle cx="2534" cy="855" r="5" fill="#555"/></g></svg>
<div class="a" style="left:1003px;top:186px;width:1295px;height:700px;background:#fff;border-radius:13px;box-shadow:0 3px 6px rgba(0,0,0,0.30),0 4px 18px rgba(0,0,0,0.12)"></div>
<div class="t" style="top:203.0px;height:40px;line-height:40px;font-size:25px;color:#3a5e8f;font-weight:normal;letter-spacing:0.029px;left:651.0142857142857px;width:2000px;text-align:center;">Settings</div>
<svg class="a" style="left:2251px;top:211px" width="24" height="24" viewBox="0 0 24 24"><path d="M1.5 1.5 L22.5 22.5 M22.5 1.5 L1.5 22.5" stroke="#111" stroke-width="3"/></svg>
<div class="a" style="left:1007px;top:251.5px;width:1287px;height:1.0px;background:#eeeeee"></div>
<div class="a" style="left:1014px;top:262px;width:204px;height:74px;background:#fff;border:1.3px solid #dedede;border-bottom:none;border-radius:7px 7px 0 0"></div>
<div class="a" style="left:1218px;top:334.5px;width:1069px;height:1.0px;background:#dcdcdc"></div>
<div class="t" style="top:281.0px;height:40px;line-height:40px;font-size:25px;color:#555;font-weight:normal;letter-spacing:-0.808px;left:1043.0px;">Page Settings</div>
<div class="t" style="top:281.0px;height:40px;line-height:40px;font-size:25px;color:#3a5e8f;font-weight:normal;letter-spacing:-0.48px;left:1250.5px;">Grid Sizing</div>
<div class="t" style="top:347.0px;height:40px;line-height:40px;font-size:25px;color:#111;font-weight:normal;letter-spacing:-0.029px;left:1022.0px;">Player Description Format</div>
<div class="t" style="top:347.0px;height:40px;line-height:40px;font-size:25px;color:#111;font-weight:normal;letter-spacing:0.052px;left:1452.0px;">Player Description Alignment</div>
<div class="t" style="top:347.0px;height:40px;line-height:40px;font-size:25px;color:#111;font-weight:normal;letter-spacing:-0.293px;left:1881.5px;">Player Description Font Size</div>
<div class="a" style="left:1021px;top:385.5px;width:400.5px;height:57.89999999999998px;background:#fff;border:1.3px solid #d9d9d9"></div>
<div class="a" style="left:1373px;top:385.5px;width:1.2999999999999545px;height:57.89999999999998px;background:#d9d9d9"></div>
<div class="t" style="top:396.0px;height:40px;line-height:40px;font-size:25px;color:#111;font-weight:normal;letter-spacing:-0.064px;left:1030.0px;">Medium Headshot</div>
<svg class="a" style="left:1384px;top:406.45px" width="24" height="16" viewBox="0 0 24 16"><path d="M2.5 3 L12 12.5 L21.5 3" stroke="#707070" stroke-width="3.2" fill="none"/></svg>
<div class="a" style="left:1451px;top:385.5px;width:400.5px;height:57.89999999999998px;background:#fff;border:1.3px solid #d9d9d9"></div>
<div class="a" style="left:1803px;top:385.5px;width:1.2999999999999545px;height:57.89999999999998px;background:#d9d9d9"></div>
<div class="t" style="top:396.0px;height:40px;line-height:40px;font-size:25px;color:#111;font-weight:normal;letter-spacing:0.333px;left:1460.0px;">Left</div>
<svg class="a" style="left:1814px;top:406.45px" width="24" height="16" viewBox="0 0 24 16"><path d="M2.5 3 L12 12.5 L21.5 3" stroke="#707070" stroke-width="3.2" fill="none"/></svg>
<div class="a" style="left:1880.5px;top:385.5px;width:400.5px;height:57.89999999999998px;background:#fff;border:1.3px solid #d9d9d9"></div>
<div class="a" style="left:2232.5px;top:385.5px;width:1.300000000000182px;height:57.89999999999998px;background:#d9d9d9"></div>
<div class="t" style="top:396.0px;height:40px;line-height:40px;font-size:25px;color:#111;font-weight:normal;letter-spacing:0.2px;left:1889.5px;">20</div>
<svg class="a" style="left:2243.5px;top:406.45px" width="24" height="16" viewBox="0 0 24 16"><path d="M2.5 3 L12 12.5 L21.5 3" stroke="#707070" stroke-width="3.2" fill="none"/></svg>
<div class="t" style="top:478.7px;height:40px;line-height:40px;font-size:25px;color:#111;font-weight:normal;letter-spacing:-0.467px;left:1025.6px;">Page Title</div>
<div class="a" style="left:1021.3px;top:516.4px;width:397.4000000000001px;height:58.30000000000007px;background:#fff;border:1.3px solid #d9d9d9"></div>
<div class="t" style="top:526.8px;height:40px;line-height:40px;font-size:25px;color:#3d434b;font-weight:normal;letter-spacing:0.054px;left:1037.7px;">Pitcher Report</div>
<div class="t" style="top:484.0px;height:40px;line-height:40px;font-size:25px;color:#111;font-weight:normal;letter-spacing:0.14px;left:1452.0px;">Title Text Color</div>
<div class="t" style="top:484.0px;height:40px;line-height:40px;font-size:25px;color:#111;font-weight:normal;letter-spacing:0.029px;left:1881.5px;">Title Background Color</div>
<div class="a" style="left:1451px;top:521px;width:400.5px;height:59px;background:#fff;border:1.3px solid #d9d9d9"></div>
<div class="a" style="left:1803px;top:521px;width:1.2999999999999545px;height:59px;background:#d9d9d9"></div>
<div class="t" style="top:532.0px;height:40px;line-height:40px;font-size:25px;color:#111;font-weight:normal;letter-spacing:-0.35px;left:1460.0px;">Black</div>
<svg class="a" style="left:1814px;top:542.5px" width="24" height="16" viewBox="0 0 24 16"><path d="M2.5 3 L12 12.5 L21.5 3" stroke="#707070" stroke-width="3.2" fill="none"/></svg>
<div class="a" style="left:1880.5px;top:521px;width:400.5px;height:59px;background:#fff;border:1.3px solid #d9d9d9"></div>
<div class="a" style="left:2232.5px;top:521px;width:1.300000000000182px;height:59px;background:#d9d9d9"></div>
<div class="t" style="top:532.0px;height:40px;line-height:40px;font-size:25px;color:#111;font-weight:normal;letter-spacing:-0.333px;left:1889.5px;">None</div>
<svg class="a" style="left:2243.5px;top:542.5px" width="24" height="16" viewBox="0 0 24 16"><path d="M2.5 3 L12 12.5 L21.5 3" stroke="#707070" stroke-width="3.2" fill="none"/></svg>
<div class="t" style="top:620.0px;height:40px;line-height:40px;font-size:25px;color:#111;font-weight:normal;letter-spacing:-0.343px;left:1022.0px;">Title Font Size</div>
<div class="t" style="top:620.0px;height:40px;line-height:40px;font-size:25px;color:#111;font-weight:normal;letter-spacing:0.34px;left:1452.0px;">Title Horizontal Alignment</div>
<div class="t" style="top:620.0px;height:40px;line-height:40px;font-size:25px;color:#111;font-weight:normal;letter-spacing:-0.515px;left:1881.5px;">Player Handedness Color (L)</div>
<div class="a" style="left:1021px;top:658.3px;width:400.5px;height:58.0px;background:#fff;border:1.3px solid #d9d9d9"></div>
<div class="a" style="left:1373px;top:658.3px;width:1.2999999999999545px;height:58.0px;background:#d9d9d9"></div>
<div class="t" style="top:668.0px;height:40px;line-height:40px;font-size:25px;color:#111;font-weight:normal;letter-spacing:0.5px;left:1030.0px;">24</div>
<svg class="a" style="left:1384px;top:679.3px" width="24" height="16" viewBox="0 0 24 16"><path d="M2.5 3 L12 12.5 L21.5 3" stroke="#707070" stroke-width="3.2" fill="none"/></svg>
<div class="a" style="left:1451px;top:658.3px;width:400.5px;height:58.0px;background:#fff;border:1.3px solid #d9d9d9"></div>
<div class="a" style="left:1803px;top:658.3px;width:1.2999999999999545px;height:58.0px;background:#d9d9d9"></div>
<div class="t" style="top:668.0px;height:40px;line-height:40px;font-size:25px;color:#111;font-weight:normal;letter-spacing:0.16px;left:1460.0px;">Center</div>
<svg class="a" style="left:1814px;top:679.3px" width="24" height="16" viewBox="0 0 24 16"><path d="M2.5 3 L12 12.5 L21.5 3" stroke="#707070" stroke-width="3.2" fill="none"/></svg>
<div class="a" style="left:1880.5px;top:658.3px;width:400.5px;height:58.0px;background:#fff;border:1.3px solid #d9d9d9"></div>
<div class="a" style="left:2232.5px;top:658.3px;width:1.300000000000182px;height:58.0px;background:#d9d9d9"></div>
<div class="t" style="top:668.0px;height:40px;line-height:40px;font-size:25px;color:#111;font-weight:normal;letter-spacing:-0.5px;left:1889.5px;">Black</div>
<svg class="a" style="left:2243.5px;top:679.3px" width="24" height="16" viewBox="0 0 24 16"><path d="M2.5 3 L12 12.5 L21.5 3" stroke="#707070" stroke-width="3.2" fill="none"/></svg>
<div class="t" style="top:756.0px;height:40px;line-height:40px;font-size:25px;color:#111;font-weight:normal;letter-spacing:-0.535px;left:1022.0px;">Player Handedness Color (R)</div>
<div class="t" style="top:756.0px;height:40px;line-height:40px;font-size:25px;color:#111;font-weight:normal;letter-spacing:-0.581px;left:1452.0px;">Player Handedness Color (S)</div>
<div class="t" style="top:756.0px;height:40px;line-height:40px;font-size:25px;color:#111;font-weight:normal;letter-spacing:0.258px;left:1881.5px;">Print Filters</div>
<div class="a" style="left:1021px;top:794px;width:400.5px;height:59px;background:#fff;border:1.3px solid #d9d9d9"></div>
<div class="a" style="left:1373px;top:794px;width:1.2999999999999545px;height:59px;background:#d9d9d9"></div>
<div class="t" style="top:804.6px;height:40px;line-height:40px;font-size:25px;color:#111;font-weight:normal;letter-spacing:-0.55px;left:1030.0px;">Black</div>
<svg class="a" style="left:1384px;top:815.5px" width="24" height="16" viewBox="0 0 24 16"><path d="M2.5 3 L12 12.5 L21.5 3" stroke="#707070" stroke-width="3.2" fill="none"/></svg>
<div class="a" style="left:1451px;top:794px;width:400.5px;height:59px;background:#fff;border:1.3px solid #d9d9d9"></div>
<div class="a" style="left:1803px;top:794px;width:1.2999999999999545px;height:59px;background:#d9d9d9"></div>
<div class="t" style="top:804.6px;height:40px;line-height:40px;font-size:25px;color:#111;font-weight:normal;letter-spacing:-0.5px;left:1460.0px;">Black</div>
<svg class="a" style="left:1814px;top:815.5px" width="24" height="16" viewBox="0 0 24 16"><path d="M2.5 3 L12 12.5 L21.5 3" stroke="#707070" stroke-width="3.2" fill="none"/></svg>
<div class="a" style="left:1882px;top:816px;width:60px;height:25px;background:#95a9c5;border-radius:13px"></div>
<div class="a" style="left:1911px;top:810px;width:36px;height:36px;border-radius:50%;background:#355a8a;box-shadow:0 1px 3px rgba(0,0,0,0.3)"></div>
<div class="a" style="left:1859.5px;top:464.5px;width:440.5px;height:146.5px;border:9px solid #6ef24b;border-radius:46px"></div>
<div class="a" style="left:780px;top:1420px;width:1300px;height:160px;background:radial-gradient(ellipse 50% 50% at 50% 62%, rgba(0,0,0,0.22), rgba(0,0,0,0.10) 55%, rgba(0,0,0,0) 100%)"></div>
<div class="a" style="left:0;top:-200px;width:2878px;height:1700px;border-radius:0 0 20px 20px;box-shadow:0 0 0 60px #15150f;border-left:2px solid rgba(255,255,255,0.2);border-bottom:2px solid rgba(255,255,255,0.2);pointer-events:none"></div>
</body></html>
